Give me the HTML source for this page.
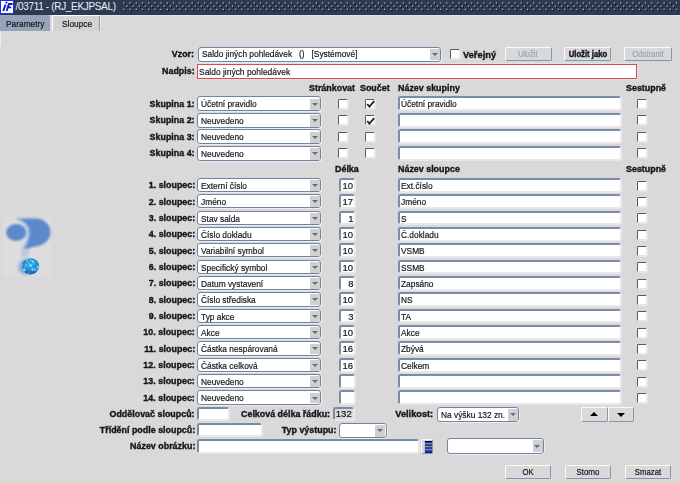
<!DOCTYPE html>
<html><head><meta charset="utf-8"><style>
html,body{margin:0;padding:0;}
body{width:680px;height:483px;overflow:hidden;position:relative;background:#d9d9d9;font-family:"Liberation Sans",sans-serif;font-size:10px;}
body>div,body>svg{position:absolute;}
.t{line-height:12px;white-space:pre;color:#14141c;-webkit-text-stroke-width:0.2px;}
.b{-webkit-text-stroke-width:0.4px;}
</style></head><body>
<div style="left:0px;top:0px;width:680px;height:14.5px;background:#2c3a52"></div>
<div style="left:0px;top:14.5px;width:680px;height:1.0px;background:#e2e4e8"></div>
<svg style="left:0;top:0" width="680" height="14"><rect x="124.20" y="3.30" width="1.3" height="1.3" fill="#080d18"/><rect x="123.20" y="2.30" width="1.3" height="1.3" fill="#b4bccb"/><rect x="127.30" y="6.50" width="1.3" height="1.3" fill="#080d18"/><rect x="126.30" y="5.50" width="1.3" height="1.3" fill="#b4bccb"/><rect x="124.20" y="9.70" width="1.3" height="1.3" fill="#080d18"/><rect x="123.20" y="8.70" width="1.3" height="1.3" fill="#b4bccb"/><rect x="130.41" y="3.30" width="1.3" height="1.3" fill="#080d18"/><rect x="129.41" y="2.30" width="1.3" height="1.3" fill="#b4bccb"/><rect x="133.51" y="6.50" width="1.3" height="1.3" fill="#080d18"/><rect x="132.51" y="5.50" width="1.3" height="1.3" fill="#b4bccb"/><rect x="130.41" y="9.70" width="1.3" height="1.3" fill="#080d18"/><rect x="129.41" y="8.70" width="1.3" height="1.3" fill="#b4bccb"/><rect x="136.62" y="3.30" width="1.3" height="1.3" fill="#080d18"/><rect x="135.62" y="2.30" width="1.3" height="1.3" fill="#b4bccb"/><rect x="139.72" y="6.50" width="1.3" height="1.3" fill="#080d18"/><rect x="138.72" y="5.50" width="1.3" height="1.3" fill="#b4bccb"/><rect x="136.62" y="9.70" width="1.3" height="1.3" fill="#080d18"/><rect x="135.62" y="8.70" width="1.3" height="1.3" fill="#b4bccb"/><rect x="142.83" y="3.30" width="1.3" height="1.3" fill="#080d18"/><rect x="141.83" y="2.30" width="1.3" height="1.3" fill="#b4bccb"/><rect x="145.93" y="6.50" width="1.3" height="1.3" fill="#080d18"/><rect x="144.93" y="5.50" width="1.3" height="1.3" fill="#b4bccb"/><rect x="142.83" y="9.70" width="1.3" height="1.3" fill="#080d18"/><rect x="141.83" y="8.70" width="1.3" height="1.3" fill="#b4bccb"/><rect x="149.04" y="3.30" width="1.3" height="1.3" fill="#080d18"/><rect x="148.04" y="2.30" width="1.3" height="1.3" fill="#b4bccb"/><rect x="152.14" y="6.50" width="1.3" height="1.3" fill="#080d18"/><rect x="151.14" y="5.50" width="1.3" height="1.3" fill="#b4bccb"/><rect x="149.04" y="9.70" width="1.3" height="1.3" fill="#080d18"/><rect x="148.04" y="8.70" width="1.3" height="1.3" fill="#b4bccb"/><rect x="155.25" y="3.30" width="1.3" height="1.3" fill="#080d18"/><rect x="154.25" y="2.30" width="1.3" height="1.3" fill="#b4bccb"/><rect x="158.35" y="6.50" width="1.3" height="1.3" fill="#080d18"/><rect x="157.35" y="5.50" width="1.3" height="1.3" fill="#b4bccb"/><rect x="155.25" y="9.70" width="1.3" height="1.3" fill="#080d18"/><rect x="154.25" y="8.70" width="1.3" height="1.3" fill="#b4bccb"/><rect x="161.46" y="3.30" width="1.3" height="1.3" fill="#080d18"/><rect x="160.46" y="2.30" width="1.3" height="1.3" fill="#b4bccb"/><rect x="164.56" y="6.50" width="1.3" height="1.3" fill="#080d18"/><rect x="163.56" y="5.50" width="1.3" height="1.3" fill="#b4bccb"/><rect x="161.46" y="9.70" width="1.3" height="1.3" fill="#080d18"/><rect x="160.46" y="8.70" width="1.3" height="1.3" fill="#b4bccb"/><rect x="167.67" y="3.30" width="1.3" height="1.3" fill="#080d18"/><rect x="166.67" y="2.30" width="1.3" height="1.3" fill="#b4bccb"/><rect x="170.77" y="6.50" width="1.3" height="1.3" fill="#080d18"/><rect x="169.77" y="5.50" width="1.3" height="1.3" fill="#b4bccb"/><rect x="167.67" y="9.70" width="1.3" height="1.3" fill="#080d18"/><rect x="166.67" y="8.70" width="1.3" height="1.3" fill="#b4bccb"/><rect x="173.88" y="3.30" width="1.3" height="1.3" fill="#080d18"/><rect x="172.88" y="2.30" width="1.3" height="1.3" fill="#b4bccb"/><rect x="176.98" y="6.50" width="1.3" height="1.3" fill="#080d18"/><rect x="175.98" y="5.50" width="1.3" height="1.3" fill="#b4bccb"/><rect x="173.88" y="9.70" width="1.3" height="1.3" fill="#080d18"/><rect x="172.88" y="8.70" width="1.3" height="1.3" fill="#b4bccb"/><rect x="180.09" y="3.30" width="1.3" height="1.3" fill="#080d18"/><rect x="179.09" y="2.30" width="1.3" height="1.3" fill="#b4bccb"/><rect x="183.19" y="6.50" width="1.3" height="1.3" fill="#080d18"/><rect x="182.19" y="5.50" width="1.3" height="1.3" fill="#b4bccb"/><rect x="180.09" y="9.70" width="1.3" height="1.3" fill="#080d18"/><rect x="179.09" y="8.70" width="1.3" height="1.3" fill="#b4bccb"/><rect x="186.30" y="3.30" width="1.3" height="1.3" fill="#080d18"/><rect x="185.30" y="2.30" width="1.3" height="1.3" fill="#b4bccb"/><rect x="189.40" y="6.50" width="1.3" height="1.3" fill="#080d18"/><rect x="188.40" y="5.50" width="1.3" height="1.3" fill="#b4bccb"/><rect x="186.30" y="9.70" width="1.3" height="1.3" fill="#080d18"/><rect x="185.30" y="8.70" width="1.3" height="1.3" fill="#b4bccb"/><rect x="192.51" y="3.30" width="1.3" height="1.3" fill="#080d18"/><rect x="191.51" y="2.30" width="1.3" height="1.3" fill="#b4bccb"/><rect x="195.61" y="6.50" width="1.3" height="1.3" fill="#080d18"/><rect x="194.61" y="5.50" width="1.3" height="1.3" fill="#b4bccb"/><rect x="192.51" y="9.70" width="1.3" height="1.3" fill="#080d18"/><rect x="191.51" y="8.70" width="1.3" height="1.3" fill="#b4bccb"/><rect x="198.72" y="3.30" width="1.3" height="1.3" fill="#080d18"/><rect x="197.72" y="2.30" width="1.3" height="1.3" fill="#b4bccb"/><rect x="201.82" y="6.50" width="1.3" height="1.3" fill="#080d18"/><rect x="200.82" y="5.50" width="1.3" height="1.3" fill="#b4bccb"/><rect x="198.72" y="9.70" width="1.3" height="1.3" fill="#080d18"/><rect x="197.72" y="8.70" width="1.3" height="1.3" fill="#b4bccb"/><rect x="204.93" y="3.30" width="1.3" height="1.3" fill="#080d18"/><rect x="203.93" y="2.30" width="1.3" height="1.3" fill="#b4bccb"/><rect x="208.03" y="6.50" width="1.3" height="1.3" fill="#080d18"/><rect x="207.03" y="5.50" width="1.3" height="1.3" fill="#b4bccb"/><rect x="204.93" y="9.70" width="1.3" height="1.3" fill="#080d18"/><rect x="203.93" y="8.70" width="1.3" height="1.3" fill="#b4bccb"/><rect x="211.14" y="3.30" width="1.3" height="1.3" fill="#080d18"/><rect x="210.14" y="2.30" width="1.3" height="1.3" fill="#b4bccb"/><rect x="214.24" y="6.50" width="1.3" height="1.3" fill="#080d18"/><rect x="213.24" y="5.50" width="1.3" height="1.3" fill="#b4bccb"/><rect x="211.14" y="9.70" width="1.3" height="1.3" fill="#080d18"/><rect x="210.14" y="8.70" width="1.3" height="1.3" fill="#b4bccb"/><rect x="217.35" y="3.30" width="1.3" height="1.3" fill="#080d18"/><rect x="216.35" y="2.30" width="1.3" height="1.3" fill="#b4bccb"/><rect x="220.45" y="6.50" width="1.3" height="1.3" fill="#080d18"/><rect x="219.45" y="5.50" width="1.3" height="1.3" fill="#b4bccb"/><rect x="217.35" y="9.70" width="1.3" height="1.3" fill="#080d18"/><rect x="216.35" y="8.70" width="1.3" height="1.3" fill="#b4bccb"/><rect x="223.56" y="3.30" width="1.3" height="1.3" fill="#080d18"/><rect x="222.56" y="2.30" width="1.3" height="1.3" fill="#b4bccb"/><rect x="226.66" y="6.50" width="1.3" height="1.3" fill="#080d18"/><rect x="225.66" y="5.50" width="1.3" height="1.3" fill="#b4bccb"/><rect x="223.56" y="9.70" width="1.3" height="1.3" fill="#080d18"/><rect x="222.56" y="8.70" width="1.3" height="1.3" fill="#b4bccb"/><rect x="229.77" y="3.30" width="1.3" height="1.3" fill="#080d18"/><rect x="228.77" y="2.30" width="1.3" height="1.3" fill="#b4bccb"/><rect x="232.87" y="6.50" width="1.3" height="1.3" fill="#080d18"/><rect x="231.87" y="5.50" width="1.3" height="1.3" fill="#b4bccb"/><rect x="229.77" y="9.70" width="1.3" height="1.3" fill="#080d18"/><rect x="228.77" y="8.70" width="1.3" height="1.3" fill="#b4bccb"/><rect x="235.98" y="3.30" width="1.3" height="1.3" fill="#080d18"/><rect x="234.98" y="2.30" width="1.3" height="1.3" fill="#b4bccb"/><rect x="239.08" y="6.50" width="1.3" height="1.3" fill="#080d18"/><rect x="238.08" y="5.50" width="1.3" height="1.3" fill="#b4bccb"/><rect x="235.98" y="9.70" width="1.3" height="1.3" fill="#080d18"/><rect x="234.98" y="8.70" width="1.3" height="1.3" fill="#b4bccb"/><rect x="242.19" y="3.30" width="1.3" height="1.3" fill="#080d18"/><rect x="241.19" y="2.30" width="1.3" height="1.3" fill="#b4bccb"/><rect x="245.29" y="6.50" width="1.3" height="1.3" fill="#080d18"/><rect x="244.29" y="5.50" width="1.3" height="1.3" fill="#b4bccb"/><rect x="242.19" y="9.70" width="1.3" height="1.3" fill="#080d18"/><rect x="241.19" y="8.70" width="1.3" height="1.3" fill="#b4bccb"/><rect x="248.40" y="3.30" width="1.3" height="1.3" fill="#080d18"/><rect x="247.40" y="2.30" width="1.3" height="1.3" fill="#b4bccb"/><rect x="251.50" y="6.50" width="1.3" height="1.3" fill="#080d18"/><rect x="250.50" y="5.50" width="1.3" height="1.3" fill="#b4bccb"/><rect x="248.40" y="9.70" width="1.3" height="1.3" fill="#080d18"/><rect x="247.40" y="8.70" width="1.3" height="1.3" fill="#b4bccb"/><rect x="254.61" y="3.30" width="1.3" height="1.3" fill="#080d18"/><rect x="253.61" y="2.30" width="1.3" height="1.3" fill="#b4bccb"/><rect x="257.71" y="6.50" width="1.3" height="1.3" fill="#080d18"/><rect x="256.71" y="5.50" width="1.3" height="1.3" fill="#b4bccb"/><rect x="254.61" y="9.70" width="1.3" height="1.3" fill="#080d18"/><rect x="253.61" y="8.70" width="1.3" height="1.3" fill="#b4bccb"/><rect x="260.82" y="3.30" width="1.3" height="1.3" fill="#080d18"/><rect x="259.82" y="2.30" width="1.3" height="1.3" fill="#b4bccb"/><rect x="263.92" y="6.50" width="1.3" height="1.3" fill="#080d18"/><rect x="262.92" y="5.50" width="1.3" height="1.3" fill="#b4bccb"/><rect x="260.82" y="9.70" width="1.3" height="1.3" fill="#080d18"/><rect x="259.82" y="8.70" width="1.3" height="1.3" fill="#b4bccb"/><rect x="267.03" y="3.30" width="1.3" height="1.3" fill="#080d18"/><rect x="266.03" y="2.30" width="1.3" height="1.3" fill="#b4bccb"/><rect x="270.13" y="6.50" width="1.3" height="1.3" fill="#080d18"/><rect x="269.13" y="5.50" width="1.3" height="1.3" fill="#b4bccb"/><rect x="267.03" y="9.70" width="1.3" height="1.3" fill="#080d18"/><rect x="266.03" y="8.70" width="1.3" height="1.3" fill="#b4bccb"/><rect x="273.24" y="3.30" width="1.3" height="1.3" fill="#080d18"/><rect x="272.24" y="2.30" width="1.3" height="1.3" fill="#b4bccb"/><rect x="276.34" y="6.50" width="1.3" height="1.3" fill="#080d18"/><rect x="275.34" y="5.50" width="1.3" height="1.3" fill="#b4bccb"/><rect x="273.24" y="9.70" width="1.3" height="1.3" fill="#080d18"/><rect x="272.24" y="8.70" width="1.3" height="1.3" fill="#b4bccb"/><rect x="279.45" y="3.30" width="1.3" height="1.3" fill="#080d18"/><rect x="278.45" y="2.30" width="1.3" height="1.3" fill="#b4bccb"/><rect x="282.55" y="6.50" width="1.3" height="1.3" fill="#080d18"/><rect x="281.55" y="5.50" width="1.3" height="1.3" fill="#b4bccb"/><rect x="279.45" y="9.70" width="1.3" height="1.3" fill="#080d18"/><rect x="278.45" y="8.70" width="1.3" height="1.3" fill="#b4bccb"/><rect x="285.66" y="3.30" width="1.3" height="1.3" fill="#080d18"/><rect x="284.66" y="2.30" width="1.3" height="1.3" fill="#b4bccb"/><rect x="288.76" y="6.50" width="1.3" height="1.3" fill="#080d18"/><rect x="287.76" y="5.50" width="1.3" height="1.3" fill="#b4bccb"/><rect x="285.66" y="9.70" width="1.3" height="1.3" fill="#080d18"/><rect x="284.66" y="8.70" width="1.3" height="1.3" fill="#b4bccb"/><rect x="291.87" y="3.30" width="1.3" height="1.3" fill="#080d18"/><rect x="290.87" y="2.30" width="1.3" height="1.3" fill="#b4bccb"/><rect x="294.97" y="6.50" width="1.3" height="1.3" fill="#080d18"/><rect x="293.97" y="5.50" width="1.3" height="1.3" fill="#b4bccb"/><rect x="291.87" y="9.70" width="1.3" height="1.3" fill="#080d18"/><rect x="290.87" y="8.70" width="1.3" height="1.3" fill="#b4bccb"/><rect x="298.08" y="3.30" width="1.3" height="1.3" fill="#080d18"/><rect x="297.08" y="2.30" width="1.3" height="1.3" fill="#b4bccb"/><rect x="301.18" y="6.50" width="1.3" height="1.3" fill="#080d18"/><rect x="300.18" y="5.50" width="1.3" height="1.3" fill="#b4bccb"/><rect x="298.08" y="9.70" width="1.3" height="1.3" fill="#080d18"/><rect x="297.08" y="8.70" width="1.3" height="1.3" fill="#b4bccb"/><rect x="304.29" y="3.30" width="1.3" height="1.3" fill="#080d18"/><rect x="303.29" y="2.30" width="1.3" height="1.3" fill="#b4bccb"/><rect x="307.39" y="6.50" width="1.3" height="1.3" fill="#080d18"/><rect x="306.39" y="5.50" width="1.3" height="1.3" fill="#b4bccb"/><rect x="304.29" y="9.70" width="1.3" height="1.3" fill="#080d18"/><rect x="303.29" y="8.70" width="1.3" height="1.3" fill="#b4bccb"/><rect x="310.50" y="3.30" width="1.3" height="1.3" fill="#080d18"/><rect x="309.50" y="2.30" width="1.3" height="1.3" fill="#b4bccb"/><rect x="313.60" y="6.50" width="1.3" height="1.3" fill="#080d18"/><rect x="312.60" y="5.50" width="1.3" height="1.3" fill="#b4bccb"/><rect x="310.50" y="9.70" width="1.3" height="1.3" fill="#080d18"/><rect x="309.50" y="8.70" width="1.3" height="1.3" fill="#b4bccb"/><rect x="316.71" y="3.30" width="1.3" height="1.3" fill="#080d18"/><rect x="315.71" y="2.30" width="1.3" height="1.3" fill="#b4bccb"/><rect x="319.81" y="6.50" width="1.3" height="1.3" fill="#080d18"/><rect x="318.81" y="5.50" width="1.3" height="1.3" fill="#b4bccb"/><rect x="316.71" y="9.70" width="1.3" height="1.3" fill="#080d18"/><rect x="315.71" y="8.70" width="1.3" height="1.3" fill="#b4bccb"/><rect x="322.92" y="3.30" width="1.3" height="1.3" fill="#080d18"/><rect x="321.92" y="2.30" width="1.3" height="1.3" fill="#b4bccb"/><rect x="326.02" y="6.50" width="1.3" height="1.3" fill="#080d18"/><rect x="325.02" y="5.50" width="1.3" height="1.3" fill="#b4bccb"/><rect x="322.92" y="9.70" width="1.3" height="1.3" fill="#080d18"/><rect x="321.92" y="8.70" width="1.3" height="1.3" fill="#b4bccb"/><rect x="329.13" y="3.30" width="1.3" height="1.3" fill="#080d18"/><rect x="328.13" y="2.30" width="1.3" height="1.3" fill="#b4bccb"/><rect x="332.23" y="6.50" width="1.3" height="1.3" fill="#080d18"/><rect x="331.23" y="5.50" width="1.3" height="1.3" fill="#b4bccb"/><rect x="329.13" y="9.70" width="1.3" height="1.3" fill="#080d18"/><rect x="328.13" y="8.70" width="1.3" height="1.3" fill="#b4bccb"/><rect x="335.34" y="3.30" width="1.3" height="1.3" fill="#080d18"/><rect x="334.34" y="2.30" width="1.3" height="1.3" fill="#b4bccb"/><rect x="338.44" y="6.50" width="1.3" height="1.3" fill="#080d18"/><rect x="337.44" y="5.50" width="1.3" height="1.3" fill="#b4bccb"/><rect x="335.34" y="9.70" width="1.3" height="1.3" fill="#080d18"/><rect x="334.34" y="8.70" width="1.3" height="1.3" fill="#b4bccb"/><rect x="341.55" y="3.30" width="1.3" height="1.3" fill="#080d18"/><rect x="340.55" y="2.30" width="1.3" height="1.3" fill="#b4bccb"/><rect x="344.65" y="6.50" width="1.3" height="1.3" fill="#080d18"/><rect x="343.65" y="5.50" width="1.3" height="1.3" fill="#b4bccb"/><rect x="341.55" y="9.70" width="1.3" height="1.3" fill="#080d18"/><rect x="340.55" y="8.70" width="1.3" height="1.3" fill="#b4bccb"/><rect x="347.76" y="3.30" width="1.3" height="1.3" fill="#080d18"/><rect x="346.76" y="2.30" width="1.3" height="1.3" fill="#b4bccb"/><rect x="350.86" y="6.50" width="1.3" height="1.3" fill="#080d18"/><rect x="349.86" y="5.50" width="1.3" height="1.3" fill="#b4bccb"/><rect x="347.76" y="9.70" width="1.3" height="1.3" fill="#080d18"/><rect x="346.76" y="8.70" width="1.3" height="1.3" fill="#b4bccb"/><rect x="353.97" y="3.30" width="1.3" height="1.3" fill="#080d18"/><rect x="352.97" y="2.30" width="1.3" height="1.3" fill="#b4bccb"/><rect x="357.07" y="6.50" width="1.3" height="1.3" fill="#080d18"/><rect x="356.07" y="5.50" width="1.3" height="1.3" fill="#b4bccb"/><rect x="353.97" y="9.70" width="1.3" height="1.3" fill="#080d18"/><rect x="352.97" y="8.70" width="1.3" height="1.3" fill="#b4bccb"/><rect x="360.18" y="3.30" width="1.3" height="1.3" fill="#080d18"/><rect x="359.18" y="2.30" width="1.3" height="1.3" fill="#b4bccb"/><rect x="363.28" y="6.50" width="1.3" height="1.3" fill="#080d18"/><rect x="362.28" y="5.50" width="1.3" height="1.3" fill="#b4bccb"/><rect x="360.18" y="9.70" width="1.3" height="1.3" fill="#080d18"/><rect x="359.18" y="8.70" width="1.3" height="1.3" fill="#b4bccb"/><rect x="366.39" y="3.30" width="1.3" height="1.3" fill="#080d18"/><rect x="365.39" y="2.30" width="1.3" height="1.3" fill="#b4bccb"/><rect x="369.49" y="6.50" width="1.3" height="1.3" fill="#080d18"/><rect x="368.49" y="5.50" width="1.3" height="1.3" fill="#b4bccb"/><rect x="366.39" y="9.70" width="1.3" height="1.3" fill="#080d18"/><rect x="365.39" y="8.70" width="1.3" height="1.3" fill="#b4bccb"/><rect x="372.60" y="3.30" width="1.3" height="1.3" fill="#080d18"/><rect x="371.60" y="2.30" width="1.3" height="1.3" fill="#b4bccb"/><rect x="375.70" y="6.50" width="1.3" height="1.3" fill="#080d18"/><rect x="374.70" y="5.50" width="1.3" height="1.3" fill="#b4bccb"/><rect x="372.60" y="9.70" width="1.3" height="1.3" fill="#080d18"/><rect x="371.60" y="8.70" width="1.3" height="1.3" fill="#b4bccb"/><rect x="378.81" y="3.30" width="1.3" height="1.3" fill="#080d18"/><rect x="377.81" y="2.30" width="1.3" height="1.3" fill="#b4bccb"/><rect x="381.91" y="6.50" width="1.3" height="1.3" fill="#080d18"/><rect x="380.91" y="5.50" width="1.3" height="1.3" fill="#b4bccb"/><rect x="378.81" y="9.70" width="1.3" height="1.3" fill="#080d18"/><rect x="377.81" y="8.70" width="1.3" height="1.3" fill="#b4bccb"/><rect x="385.02" y="3.30" width="1.3" height="1.3" fill="#080d18"/><rect x="384.02" y="2.30" width="1.3" height="1.3" fill="#b4bccb"/><rect x="388.12" y="6.50" width="1.3" height="1.3" fill="#080d18"/><rect x="387.12" y="5.50" width="1.3" height="1.3" fill="#b4bccb"/><rect x="385.02" y="9.70" width="1.3" height="1.3" fill="#080d18"/><rect x="384.02" y="8.70" width="1.3" height="1.3" fill="#b4bccb"/><rect x="391.23" y="3.30" width="1.3" height="1.3" fill="#080d18"/><rect x="390.23" y="2.30" width="1.3" height="1.3" fill="#b4bccb"/><rect x="394.33" y="6.50" width="1.3" height="1.3" fill="#080d18"/><rect x="393.33" y="5.50" width="1.3" height="1.3" fill="#b4bccb"/><rect x="391.23" y="9.70" width="1.3" height="1.3" fill="#080d18"/><rect x="390.23" y="8.70" width="1.3" height="1.3" fill="#b4bccb"/><rect x="397.44" y="3.30" width="1.3" height="1.3" fill="#080d18"/><rect x="396.44" y="2.30" width="1.3" height="1.3" fill="#b4bccb"/><rect x="400.54" y="6.50" width="1.3" height="1.3" fill="#080d18"/><rect x="399.54" y="5.50" width="1.3" height="1.3" fill="#b4bccb"/><rect x="397.44" y="9.70" width="1.3" height="1.3" fill="#080d18"/><rect x="396.44" y="8.70" width="1.3" height="1.3" fill="#b4bccb"/><rect x="403.65" y="3.30" width="1.3" height="1.3" fill="#080d18"/><rect x="402.65" y="2.30" width="1.3" height="1.3" fill="#b4bccb"/><rect x="406.75" y="6.50" width="1.3" height="1.3" fill="#080d18"/><rect x="405.75" y="5.50" width="1.3" height="1.3" fill="#b4bccb"/><rect x="403.65" y="9.70" width="1.3" height="1.3" fill="#080d18"/><rect x="402.65" y="8.70" width="1.3" height="1.3" fill="#b4bccb"/><rect x="409.86" y="3.30" width="1.3" height="1.3" fill="#080d18"/><rect x="408.86" y="2.30" width="1.3" height="1.3" fill="#b4bccb"/><rect x="412.96" y="6.50" width="1.3" height="1.3" fill="#080d18"/><rect x="411.96" y="5.50" width="1.3" height="1.3" fill="#b4bccb"/><rect x="409.86" y="9.70" width="1.3" height="1.3" fill="#080d18"/><rect x="408.86" y="8.70" width="1.3" height="1.3" fill="#b4bccb"/><rect x="416.07" y="3.30" width="1.3" height="1.3" fill="#080d18"/><rect x="415.07" y="2.30" width="1.3" height="1.3" fill="#b4bccb"/><rect x="419.17" y="6.50" width="1.3" height="1.3" fill="#080d18"/><rect x="418.17" y="5.50" width="1.3" height="1.3" fill="#b4bccb"/><rect x="416.07" y="9.70" width="1.3" height="1.3" fill="#080d18"/><rect x="415.07" y="8.70" width="1.3" height="1.3" fill="#b4bccb"/><rect x="422.28" y="3.30" width="1.3" height="1.3" fill="#080d18"/><rect x="421.28" y="2.30" width="1.3" height="1.3" fill="#b4bccb"/><rect x="425.38" y="6.50" width="1.3" height="1.3" fill="#080d18"/><rect x="424.38" y="5.50" width="1.3" height="1.3" fill="#b4bccb"/><rect x="422.28" y="9.70" width="1.3" height="1.3" fill="#080d18"/><rect x="421.28" y="8.70" width="1.3" height="1.3" fill="#b4bccb"/><rect x="428.49" y="3.30" width="1.3" height="1.3" fill="#080d18"/><rect x="427.49" y="2.30" width="1.3" height="1.3" fill="#b4bccb"/><rect x="431.59" y="6.50" width="1.3" height="1.3" fill="#080d18"/><rect x="430.59" y="5.50" width="1.3" height="1.3" fill="#b4bccb"/><rect x="428.49" y="9.70" width="1.3" height="1.3" fill="#080d18"/><rect x="427.49" y="8.70" width="1.3" height="1.3" fill="#b4bccb"/><rect x="434.70" y="3.30" width="1.3" height="1.3" fill="#080d18"/><rect x="433.70" y="2.30" width="1.3" height="1.3" fill="#b4bccb"/><rect x="437.80" y="6.50" width="1.3" height="1.3" fill="#080d18"/><rect x="436.80" y="5.50" width="1.3" height="1.3" fill="#b4bccb"/><rect x="434.70" y="9.70" width="1.3" height="1.3" fill="#080d18"/><rect x="433.70" y="8.70" width="1.3" height="1.3" fill="#b4bccb"/><rect x="440.91" y="3.30" width="1.3" height="1.3" fill="#080d18"/><rect x="439.91" y="2.30" width="1.3" height="1.3" fill="#b4bccb"/><rect x="444.01" y="6.50" width="1.3" height="1.3" fill="#080d18"/><rect x="443.01" y="5.50" width="1.3" height="1.3" fill="#b4bccb"/><rect x="440.91" y="9.70" width="1.3" height="1.3" fill="#080d18"/><rect x="439.91" y="8.70" width="1.3" height="1.3" fill="#b4bccb"/><rect x="447.12" y="3.30" width="1.3" height="1.3" fill="#080d18"/><rect x="446.12" y="2.30" width="1.3" height="1.3" fill="#b4bccb"/><rect x="450.22" y="6.50" width="1.3" height="1.3" fill="#080d18"/><rect x="449.22" y="5.50" width="1.3" height="1.3" fill="#b4bccb"/><rect x="447.12" y="9.70" width="1.3" height="1.3" fill="#080d18"/><rect x="446.12" y="8.70" width="1.3" height="1.3" fill="#b4bccb"/><rect x="453.33" y="3.30" width="1.3" height="1.3" fill="#080d18"/><rect x="452.33" y="2.30" width="1.3" height="1.3" fill="#b4bccb"/><rect x="456.43" y="6.50" width="1.3" height="1.3" fill="#080d18"/><rect x="455.43" y="5.50" width="1.3" height="1.3" fill="#b4bccb"/><rect x="453.33" y="9.70" width="1.3" height="1.3" fill="#080d18"/><rect x="452.33" y="8.70" width="1.3" height="1.3" fill="#b4bccb"/><rect x="459.54" y="3.30" width="1.3" height="1.3" fill="#080d18"/><rect x="458.54" y="2.30" width="1.3" height="1.3" fill="#b4bccb"/><rect x="462.64" y="6.50" width="1.3" height="1.3" fill="#080d18"/><rect x="461.64" y="5.50" width="1.3" height="1.3" fill="#b4bccb"/><rect x="459.54" y="9.70" width="1.3" height="1.3" fill="#080d18"/><rect x="458.54" y="8.70" width="1.3" height="1.3" fill="#b4bccb"/><rect x="465.75" y="3.30" width="1.3" height="1.3" fill="#080d18"/><rect x="464.75" y="2.30" width="1.3" height="1.3" fill="#b4bccb"/><rect x="468.85" y="6.50" width="1.3" height="1.3" fill="#080d18"/><rect x="467.85" y="5.50" width="1.3" height="1.3" fill="#b4bccb"/><rect x="465.75" y="9.70" width="1.3" height="1.3" fill="#080d18"/><rect x="464.75" y="8.70" width="1.3" height="1.3" fill="#b4bccb"/><rect x="471.96" y="3.30" width="1.3" height="1.3" fill="#080d18"/><rect x="470.96" y="2.30" width="1.3" height="1.3" fill="#b4bccb"/><rect x="475.06" y="6.50" width="1.3" height="1.3" fill="#080d18"/><rect x="474.06" y="5.50" width="1.3" height="1.3" fill="#b4bccb"/><rect x="471.96" y="9.70" width="1.3" height="1.3" fill="#080d18"/><rect x="470.96" y="8.70" width="1.3" height="1.3" fill="#b4bccb"/><rect x="478.17" y="3.30" width="1.3" height="1.3" fill="#080d18"/><rect x="477.17" y="2.30" width="1.3" height="1.3" fill="#b4bccb"/><rect x="481.27" y="6.50" width="1.3" height="1.3" fill="#080d18"/><rect x="480.27" y="5.50" width="1.3" height="1.3" fill="#b4bccb"/><rect x="478.17" y="9.70" width="1.3" height="1.3" fill="#080d18"/><rect x="477.17" y="8.70" width="1.3" height="1.3" fill="#b4bccb"/><rect x="484.38" y="3.30" width="1.3" height="1.3" fill="#080d18"/><rect x="483.38" y="2.30" width="1.3" height="1.3" fill="#b4bccb"/><rect x="487.48" y="6.50" width="1.3" height="1.3" fill="#080d18"/><rect x="486.48" y="5.50" width="1.3" height="1.3" fill="#b4bccb"/><rect x="484.38" y="9.70" width="1.3" height="1.3" fill="#080d18"/><rect x="483.38" y="8.70" width="1.3" height="1.3" fill="#b4bccb"/><rect x="490.59" y="3.30" width="1.3" height="1.3" fill="#080d18"/><rect x="489.59" y="2.30" width="1.3" height="1.3" fill="#b4bccb"/><rect x="493.69" y="6.50" width="1.3" height="1.3" fill="#080d18"/><rect x="492.69" y="5.50" width="1.3" height="1.3" fill="#b4bccb"/><rect x="490.59" y="9.70" width="1.3" height="1.3" fill="#080d18"/><rect x="489.59" y="8.70" width="1.3" height="1.3" fill="#b4bccb"/><rect x="496.80" y="3.30" width="1.3" height="1.3" fill="#080d18"/><rect x="495.80" y="2.30" width="1.3" height="1.3" fill="#b4bccb"/><rect x="499.90" y="6.50" width="1.3" height="1.3" fill="#080d18"/><rect x="498.90" y="5.50" width="1.3" height="1.3" fill="#b4bccb"/><rect x="496.80" y="9.70" width="1.3" height="1.3" fill="#080d18"/><rect x="495.80" y="8.70" width="1.3" height="1.3" fill="#b4bccb"/><rect x="503.01" y="3.30" width="1.3" height="1.3" fill="#080d18"/><rect x="502.01" y="2.30" width="1.3" height="1.3" fill="#b4bccb"/><rect x="506.11" y="6.50" width="1.3" height="1.3" fill="#080d18"/><rect x="505.11" y="5.50" width="1.3" height="1.3" fill="#b4bccb"/><rect x="503.01" y="9.70" width="1.3" height="1.3" fill="#080d18"/><rect x="502.01" y="8.70" width="1.3" height="1.3" fill="#b4bccb"/><rect x="509.22" y="3.30" width="1.3" height="1.3" fill="#080d18"/><rect x="508.22" y="2.30" width="1.3" height="1.3" fill="#b4bccb"/><rect x="512.32" y="6.50" width="1.3" height="1.3" fill="#080d18"/><rect x="511.32" y="5.50" width="1.3" height="1.3" fill="#b4bccb"/><rect x="509.22" y="9.70" width="1.3" height="1.3" fill="#080d18"/><rect x="508.22" y="8.70" width="1.3" height="1.3" fill="#b4bccb"/><rect x="515.43" y="3.30" width="1.3" height="1.3" fill="#080d18"/><rect x="514.43" y="2.30" width="1.3" height="1.3" fill="#b4bccb"/><rect x="518.53" y="6.50" width="1.3" height="1.3" fill="#080d18"/><rect x="517.53" y="5.50" width="1.3" height="1.3" fill="#b4bccb"/><rect x="515.43" y="9.70" width="1.3" height="1.3" fill="#080d18"/><rect x="514.43" y="8.70" width="1.3" height="1.3" fill="#b4bccb"/><rect x="521.64" y="3.30" width="1.3" height="1.3" fill="#080d18"/><rect x="520.64" y="2.30" width="1.3" height="1.3" fill="#b4bccb"/><rect x="524.74" y="6.50" width="1.3" height="1.3" fill="#080d18"/><rect x="523.74" y="5.50" width="1.3" height="1.3" fill="#b4bccb"/><rect x="521.64" y="9.70" width="1.3" height="1.3" fill="#080d18"/><rect x="520.64" y="8.70" width="1.3" height="1.3" fill="#b4bccb"/><rect x="527.85" y="3.30" width="1.3" height="1.3" fill="#080d18"/><rect x="526.85" y="2.30" width="1.3" height="1.3" fill="#b4bccb"/><rect x="530.95" y="6.50" width="1.3" height="1.3" fill="#080d18"/><rect x="529.95" y="5.50" width="1.3" height="1.3" fill="#b4bccb"/><rect x="527.85" y="9.70" width="1.3" height="1.3" fill="#080d18"/><rect x="526.85" y="8.70" width="1.3" height="1.3" fill="#b4bccb"/><rect x="534.06" y="3.30" width="1.3" height="1.3" fill="#080d18"/><rect x="533.06" y="2.30" width="1.3" height="1.3" fill="#b4bccb"/><rect x="537.16" y="6.50" width="1.3" height="1.3" fill="#080d18"/><rect x="536.16" y="5.50" width="1.3" height="1.3" fill="#b4bccb"/><rect x="534.06" y="9.70" width="1.3" height="1.3" fill="#080d18"/><rect x="533.06" y="8.70" width="1.3" height="1.3" fill="#b4bccb"/><rect x="540.27" y="3.30" width="1.3" height="1.3" fill="#080d18"/><rect x="539.27" y="2.30" width="1.3" height="1.3" fill="#b4bccb"/><rect x="543.37" y="6.50" width="1.3" height="1.3" fill="#080d18"/><rect x="542.37" y="5.50" width="1.3" height="1.3" fill="#b4bccb"/><rect x="540.27" y="9.70" width="1.3" height="1.3" fill="#080d18"/><rect x="539.27" y="8.70" width="1.3" height="1.3" fill="#b4bccb"/><rect x="546.48" y="3.30" width="1.3" height="1.3" fill="#080d18"/><rect x="545.48" y="2.30" width="1.3" height="1.3" fill="#b4bccb"/><rect x="549.58" y="6.50" width="1.3" height="1.3" fill="#080d18"/><rect x="548.58" y="5.50" width="1.3" height="1.3" fill="#b4bccb"/><rect x="546.48" y="9.70" width="1.3" height="1.3" fill="#080d18"/><rect x="545.48" y="8.70" width="1.3" height="1.3" fill="#b4bccb"/><rect x="552.69" y="3.30" width="1.3" height="1.3" fill="#080d18"/><rect x="551.69" y="2.30" width="1.3" height="1.3" fill="#b4bccb"/><rect x="555.79" y="6.50" width="1.3" height="1.3" fill="#080d18"/><rect x="554.79" y="5.50" width="1.3" height="1.3" fill="#b4bccb"/><rect x="552.69" y="9.70" width="1.3" height="1.3" fill="#080d18"/><rect x="551.69" y="8.70" width="1.3" height="1.3" fill="#b4bccb"/><rect x="558.90" y="3.30" width="1.3" height="1.3" fill="#080d18"/><rect x="557.90" y="2.30" width="1.3" height="1.3" fill="#b4bccb"/><rect x="562.00" y="6.50" width="1.3" height="1.3" fill="#080d18"/><rect x="561.00" y="5.50" width="1.3" height="1.3" fill="#b4bccb"/><rect x="558.90" y="9.70" width="1.3" height="1.3" fill="#080d18"/><rect x="557.90" y="8.70" width="1.3" height="1.3" fill="#b4bccb"/><rect x="565.11" y="3.30" width="1.3" height="1.3" fill="#080d18"/><rect x="564.11" y="2.30" width="1.3" height="1.3" fill="#b4bccb"/><rect x="568.21" y="6.50" width="1.3" height="1.3" fill="#080d18"/><rect x="567.21" y="5.50" width="1.3" height="1.3" fill="#b4bccb"/><rect x="565.11" y="9.70" width="1.3" height="1.3" fill="#080d18"/><rect x="564.11" y="8.70" width="1.3" height="1.3" fill="#b4bccb"/><rect x="571.32" y="3.30" width="1.3" height="1.3" fill="#080d18"/><rect x="570.32" y="2.30" width="1.3" height="1.3" fill="#b4bccb"/><rect x="574.42" y="6.50" width="1.3" height="1.3" fill="#080d18"/><rect x="573.42" y="5.50" width="1.3" height="1.3" fill="#b4bccb"/><rect x="571.32" y="9.70" width="1.3" height="1.3" fill="#080d18"/><rect x="570.32" y="8.70" width="1.3" height="1.3" fill="#b4bccb"/><rect x="577.53" y="3.30" width="1.3" height="1.3" fill="#080d18"/><rect x="576.53" y="2.30" width="1.3" height="1.3" fill="#b4bccb"/><rect x="580.63" y="6.50" width="1.3" height="1.3" fill="#080d18"/><rect x="579.63" y="5.50" width="1.3" height="1.3" fill="#b4bccb"/><rect x="577.53" y="9.70" width="1.3" height="1.3" fill="#080d18"/><rect x="576.53" y="8.70" width="1.3" height="1.3" fill="#b4bccb"/><rect x="583.74" y="3.30" width="1.3" height="1.3" fill="#080d18"/><rect x="582.74" y="2.30" width="1.3" height="1.3" fill="#b4bccb"/><rect x="586.84" y="6.50" width="1.3" height="1.3" fill="#080d18"/><rect x="585.84" y="5.50" width="1.3" height="1.3" fill="#b4bccb"/><rect x="583.74" y="9.70" width="1.3" height="1.3" fill="#080d18"/><rect x="582.74" y="8.70" width="1.3" height="1.3" fill="#b4bccb"/><rect x="589.95" y="3.30" width="1.3" height="1.3" fill="#080d18"/><rect x="588.95" y="2.30" width="1.3" height="1.3" fill="#b4bccb"/><rect x="593.05" y="6.50" width="1.3" height="1.3" fill="#080d18"/><rect x="592.05" y="5.50" width="1.3" height="1.3" fill="#b4bccb"/><rect x="589.95" y="9.70" width="1.3" height="1.3" fill="#080d18"/><rect x="588.95" y="8.70" width="1.3" height="1.3" fill="#b4bccb"/><rect x="596.16" y="3.30" width="1.3" height="1.3" fill="#080d18"/><rect x="595.16" y="2.30" width="1.3" height="1.3" fill="#b4bccb"/><rect x="599.26" y="6.50" width="1.3" height="1.3" fill="#080d18"/><rect x="598.26" y="5.50" width="1.3" height="1.3" fill="#b4bccb"/><rect x="596.16" y="9.70" width="1.3" height="1.3" fill="#080d18"/><rect x="595.16" y="8.70" width="1.3" height="1.3" fill="#b4bccb"/><rect x="602.37" y="3.30" width="1.3" height="1.3" fill="#080d18"/><rect x="601.37" y="2.30" width="1.3" height="1.3" fill="#b4bccb"/><rect x="605.47" y="6.50" width="1.3" height="1.3" fill="#080d18"/><rect x="604.47" y="5.50" width="1.3" height="1.3" fill="#b4bccb"/><rect x="602.37" y="9.70" width="1.3" height="1.3" fill="#080d18"/><rect x="601.37" y="8.70" width="1.3" height="1.3" fill="#b4bccb"/><rect x="608.58" y="3.30" width="1.3" height="1.3" fill="#080d18"/><rect x="607.58" y="2.30" width="1.3" height="1.3" fill="#b4bccb"/><rect x="611.68" y="6.50" width="1.3" height="1.3" fill="#080d18"/><rect x="610.68" y="5.50" width="1.3" height="1.3" fill="#b4bccb"/><rect x="608.58" y="9.70" width="1.3" height="1.3" fill="#080d18"/><rect x="607.58" y="8.70" width="1.3" height="1.3" fill="#b4bccb"/><rect x="614.79" y="3.30" width="1.3" height="1.3" fill="#080d18"/><rect x="613.79" y="2.30" width="1.3" height="1.3" fill="#b4bccb"/><rect x="617.89" y="6.50" width="1.3" height="1.3" fill="#080d18"/><rect x="616.89" y="5.50" width="1.3" height="1.3" fill="#b4bccb"/><rect x="614.79" y="9.70" width="1.3" height="1.3" fill="#080d18"/><rect x="613.79" y="8.70" width="1.3" height="1.3" fill="#b4bccb"/><rect x="621.00" y="3.30" width="1.3" height="1.3" fill="#080d18"/><rect x="620.00" y="2.30" width="1.3" height="1.3" fill="#b4bccb"/><rect x="624.10" y="6.50" width="1.3" height="1.3" fill="#080d18"/><rect x="623.10" y="5.50" width="1.3" height="1.3" fill="#b4bccb"/><rect x="621.00" y="9.70" width="1.3" height="1.3" fill="#080d18"/><rect x="620.00" y="8.70" width="1.3" height="1.3" fill="#b4bccb"/><rect x="627.21" y="3.30" width="1.3" height="1.3" fill="#080d18"/><rect x="626.21" y="2.30" width="1.3" height="1.3" fill="#b4bccb"/><rect x="630.31" y="6.50" width="1.3" height="1.3" fill="#080d18"/><rect x="629.31" y="5.50" width="1.3" height="1.3" fill="#b4bccb"/><rect x="627.21" y="9.70" width="1.3" height="1.3" fill="#080d18"/><rect x="626.21" y="8.70" width="1.3" height="1.3" fill="#b4bccb"/><rect x="633.42" y="3.30" width="1.3" height="1.3" fill="#080d18"/><rect x="632.42" y="2.30" width="1.3" height="1.3" fill="#b4bccb"/><rect x="636.52" y="6.50" width="1.3" height="1.3" fill="#080d18"/><rect x="635.52" y="5.50" width="1.3" height="1.3" fill="#b4bccb"/><rect x="633.42" y="9.70" width="1.3" height="1.3" fill="#080d18"/><rect x="632.42" y="8.70" width="1.3" height="1.3" fill="#b4bccb"/><rect x="639.63" y="3.30" width="1.3" height="1.3" fill="#080d18"/><rect x="638.63" y="2.30" width="1.3" height="1.3" fill="#b4bccb"/><rect x="642.73" y="6.50" width="1.3" height="1.3" fill="#080d18"/><rect x="641.73" y="5.50" width="1.3" height="1.3" fill="#b4bccb"/><rect x="639.63" y="9.70" width="1.3" height="1.3" fill="#080d18"/><rect x="638.63" y="8.70" width="1.3" height="1.3" fill="#b4bccb"/><rect x="645.84" y="3.30" width="1.3" height="1.3" fill="#080d18"/><rect x="644.84" y="2.30" width="1.3" height="1.3" fill="#b4bccb"/><rect x="648.94" y="6.50" width="1.3" height="1.3" fill="#080d18"/><rect x="647.94" y="5.50" width="1.3" height="1.3" fill="#b4bccb"/><rect x="645.84" y="9.70" width="1.3" height="1.3" fill="#080d18"/><rect x="644.84" y="8.70" width="1.3" height="1.3" fill="#b4bccb"/><rect x="652.05" y="3.30" width="1.3" height="1.3" fill="#080d18"/><rect x="651.05" y="2.30" width="1.3" height="1.3" fill="#b4bccb"/><rect x="655.15" y="6.50" width="1.3" height="1.3" fill="#080d18"/><rect x="654.15" y="5.50" width="1.3" height="1.3" fill="#b4bccb"/><rect x="652.05" y="9.70" width="1.3" height="1.3" fill="#080d18"/><rect x="651.05" y="8.70" width="1.3" height="1.3" fill="#b4bccb"/><rect x="658.26" y="3.30" width="1.3" height="1.3" fill="#080d18"/><rect x="657.26" y="2.30" width="1.3" height="1.3" fill="#b4bccb"/><rect x="661.36" y="6.50" width="1.3" height="1.3" fill="#080d18"/><rect x="660.36" y="5.50" width="1.3" height="1.3" fill="#b4bccb"/><rect x="658.26" y="9.70" width="1.3" height="1.3" fill="#080d18"/><rect x="657.26" y="8.70" width="1.3" height="1.3" fill="#b4bccb"/><rect x="664.47" y="3.30" width="1.3" height="1.3" fill="#080d18"/><rect x="663.47" y="2.30" width="1.3" height="1.3" fill="#b4bccb"/><rect x="667.57" y="6.50" width="1.3" height="1.3" fill="#080d18"/><rect x="666.57" y="5.50" width="1.3" height="1.3" fill="#b4bccb"/><rect x="664.47" y="9.70" width="1.3" height="1.3" fill="#080d18"/><rect x="663.47" y="8.70" width="1.3" height="1.3" fill="#b4bccb"/><rect x="670.68" y="3.30" width="1.3" height="1.3" fill="#080d18"/><rect x="669.68" y="2.30" width="1.3" height="1.3" fill="#b4bccb"/><rect x="673.78" y="6.50" width="1.3" height="1.3" fill="#080d18"/><rect x="672.78" y="5.50" width="1.3" height="1.3" fill="#b4bccb"/><rect x="670.68" y="9.70" width="1.3" height="1.3" fill="#080d18"/><rect x="669.68" y="8.70" width="1.3" height="1.3" fill="#b4bccb"/><rect x="676.89" y="3.30" width="1.3" height="1.3" fill="#080d18"/><rect x="675.89" y="2.30" width="1.3" height="1.3" fill="#b4bccb"/><rect x="676.89" y="9.70" width="1.3" height="1.3" fill="#080d18"/><rect x="675.89" y="8.70" width="1.3" height="1.3" fill="#b4bccb"/></svg>
<div style="left:0px;top:0px;width:13.5px;height:13.5px;background:#fff;border:1.3px solid #1f2fe0;box-sizing:border-box"></div>
<svg style="left:0;top:0" width="14" height="14" viewBox="0 0 14 14"><path d="M3.2 11 L5.6 4.6" stroke="#0c18d8" stroke-width="1.9"/><circle cx="6.4" cy="2.6" r="1.1" fill="#0c18d8"/><path d="M6.6 11 L9 4 L12.6 4 M7.9 7.4 L11.2 7.4" stroke="#0c18d8" stroke-width="1.9" fill="none"/></svg>
<div class="t" style="left:15.5px;top:1.2px;font-size:10px;line-height:11px;color:#eef2f8;letter-spacing:-0.33px;-webkit-text-stroke-width:0">/03711 - (RJ_EKJPSAL)</div>
<div style="left:0px;top:15px;width:49.5px;height:16px;background:#96a3b8;border-top-right-radius:2px"></div>
<div class="t" style="left:6.2px;top:17.54px;color:#14141c;transform:scale(0.835,0.97);transform-origin:0 9.46px">Parametry</div>
<div style="left:52px;top:15px;width:48px;height:15.600000000000001px;box-sizing:border-box;background:#d3d3d3;border-top:1px solid #fff;border-left:1px solid #fff;border-right:1.2px solid #8a96ad;box-shadow:1px 0 0 #ececec;border-top-left-radius:2px;border-top-right-radius:2px"></div>
<div class="t" style="left:62px;top:17.54px;color:#14141c;transform:scale(0.835,0.97);transform-origin:0 9.46px">Sloupce</div>
<div style="left:0px;top:31px;width:1.2px;height:15px;background:#ececec"></div>
<div class="t b" style="right:486px;top:47.53px;font-weight:bold;color:#14141c;transform:scale(0.89,0.97);transform-origin:100% 9.46px">Vzor:</div>
<div style="left:198px;top:46.5px;width:243px;height:15.0px;background:#fff;border:1.6px solid #7183a4;border-radius:3px;box-sizing:border-box;box-shadow:0.8px 0.8px 0 #f2f2f2"></div>
<div style="left:429.8px;top:48.7px;width:10.0px;height:11.599999999999994px;background:#d0d0d0"></div>
<div style="left:431.5px;top:53.0px;width:0;height:0;border-left:3px solid transparent;border-right:3px solid transparent;border-top:3.5px solid #5b6f96"></div>
<div class="t" style="left:201.6px;top:48.23px;color:#14141c;transform:scale(0.835,0.97);transform-origin:0 9.46px">Saldo jiných pohledávek &nbsp;&nbsp;()&nbsp;&nbsp; [Systémové]</div>
<div style="left:450px;top:49.0px;width:10px;height:10px;box-sizing:border-box;background:#fff;border-top:1.5px solid #505b72;border-left:1.5px solid #505b72;border-right:1px solid #e4e4e4;border-bottom:1px solid #e4e4e4;border-radius:1.5px;box-shadow:0.6px 0.6px 0 #f4f4f4"></div>
<div class="t b" style="left:463.2px;top:48.53px;font-weight:bold;color:#14141c;transform:scale(0.93,0.97);transform-origin:0 9.46px">Veřejný</div>
<div style="left:504.5px;top:46.8px;width:47.5px;height:14.200000000000003px;box-sizing:border-box;background:#d9d9d9;border-top:1px solid #fafafa;border-left:1px solid #fafafa;border-right:1.5px solid #8393b0;border-bottom:1.5px solid #8393b0;border-radius:2px"></div>
<div class="t" style="left:428.25px;width:200px;text-align:center;top:48.08px;font-size:9px;color:#97a3bd;transform:scale(0.86,0.97);transform-origin:50% 9.12px">Uložit</div>
<div style="left:564.3px;top:46.8px;width:47.200000000000045px;height:14.200000000000003px;box-sizing:border-box;background:#d9d9d9;border-top:1px solid #fafafa;border-left:1px solid #fafafa;border-right:1.5px solid #8393b0;border-bottom:1.5px solid #8393b0;border-radius:2px"></div>
<div class="t b" style="left:487.9px;width:200px;text-align:center;top:48.08px;font-size:9px;font-weight:bold;color:#14141c;transform:scale(0.86,0.97);transform-origin:50% 9.12px">Uložit jako</div>
<div style="left:624px;top:46.8px;width:47.5px;height:14.200000000000003px;box-sizing:border-box;background:#d9d9d9;border-top:1px solid #fafafa;border-left:1px solid #fafafa;border-right:1.5px solid #8393b0;border-bottom:1.5px solid #8393b0;border-radius:2px"></div>
<div class="t" style="left:547.75px;width:200px;text-align:center;top:48.08px;font-size:9px;color:#97a3bd;transform:scale(0.86,0.97);transform-origin:50% 9.12px">Odstranit</div>
<div class="t b" style="right:485px;top:65.33px;font-weight:bold;color:#14141c;transform:scale(0.89,0.97);transform-origin:100% 9.46px">Nadpis:</div>
<div style="left:196.8px;top:63.8px;width:440.09999999999997px;height:15.200000000000003px;box-sizing:border-box;background:#fff;border:1.5px solid #e54446;box-shadow:0 0 0 0.8px #d3ecec"></div>
<div class="t" style="left:199px;top:65.73px;color:#14141c;transform:scale(0.845,0.97);transform-origin:0 9.46px">Saldo jiných pohledávek</div>
<div class="t b" style="left:309.4px;top:81.53px;font-weight:bold;color:#14141c;transform:scale(0.89,0.97);transform-origin:0 9.46px">Stránkovat</div>
<div class="t b" style="left:360px;top:81.53px;font-weight:bold;color:#14141c;transform:scale(0.89,0.97);transform-origin:0 9.46px">Součet</div>
<div class="t b" style="left:398px;top:81.53px;font-weight:bold;color:#14141c;transform:scale(0.89,0.97);transform-origin:0 9.46px">Název skupiny</div>
<div class="t b" style="left:625.6px;top:81.53px;font-weight:bold;color:#14141c;transform:scale(0.89,0.97);transform-origin:0 9.46px">Sestupně</div>
<div class="t b" style="right:485px;top:97.83px;font-weight:bold;color:#14141c;transform:scale(0.89,0.97);transform-origin:100% 9.46px">Skupina 1:</div>
<div style="left:197.2px;top:96.3px;width:124.0px;height:15.099999999999994px;background:#fff;border:1.6px solid #7183a4;border-radius:3px;box-sizing:border-box;box-shadow:0.8px 0.8px 0 #f2f2f2"></div>
<div style="left:310.0px;top:98.5px;width:10.0px;height:11.699999999999989px;background:#d0d0d0"></div>
<div style="left:311.7px;top:102.85px;width:0;height:0;border-left:3px solid transparent;border-right:3px solid transparent;border-top:3.5px solid #5b6f96"></div>
<div class="t" style="left:200.79999999999998px;top:98.44px;color:#14141c;transform:scale(0.835,0.97);transform-origin:0 9.46px">Účetní pravidlo</div>
<div style="left:338px;top:98.60000000000001px;width:10px;height:10px;box-sizing:border-box;background:#fff;border-top:1.5px solid #505b72;border-left:1.5px solid #505b72;border-right:1px solid #e4e4e4;border-bottom:1px solid #e4e4e4;border-radius:1.5px;box-shadow:0.6px 0.6px 0 #f4f4f4"></div>
<div style="left:365px;top:98.60000000000001px;width:10px;height:10px;box-sizing:border-box;background:#fff;border-top:1.5px solid #505b72;border-left:1.5px solid #505b72;border-right:1px solid #e4e4e4;border-bottom:1px solid #e4e4e4;border-radius:1.5px;box-shadow:0.6px 0.6px 0 #f4f4f4"></div>
<svg style="left:365px;top:99.10000000000001px" width="11" height="10" viewBox="0 0 11 10"><path d="M2.2 5.2 L4.4 7.6 L9.2 2.2" fill="none" stroke="#1a2236" stroke-width="1.8"/></svg>
<div style="left:398.2px;top:96.3px;width:222.8px;height:14.099999999999994px;background:#fff;border-top:2px solid #7b8caa;border-left:2px solid #7b8caa;border-right:1px solid #e8e8e8;border-bottom:1px solid #e8e8e8;border-radius:2.5px;box-sizing:border-box;box-shadow:0.6px 0.6px 0 #f6f6f6"></div>
<div class="t" style="left:401.0px;top:98.33px;color:#14141c;transform:scale(0.835,0.97);transform-origin:0 9.46px">Účetní pravidlo</div>
<div style="left:636.8px;top:98.60000000000001px;width:10px;height:10px;box-sizing:border-box;background:#fff;border-top:1.5px solid #505b72;border-left:1.5px solid #505b72;border-right:1px solid #e4e4e4;border-bottom:1px solid #e4e4e4;border-radius:1.5px;box-shadow:0.6px 0.6px 0 #f4f4f4"></div>
<div class="t b" style="right:485px;top:114.36px;font-weight:bold;color:#14141c;transform:scale(0.89,0.97);transform-origin:100% 9.46px">Skupina 2:</div>
<div style="left:197.2px;top:112.83px;width:124.0px;height:15.099999999999994px;background:#fff;border:1.6px solid #7183a4;border-radius:3px;box-sizing:border-box;box-shadow:0.8px 0.8px 0 #f2f2f2"></div>
<div style="left:310.0px;top:115.03px;width:10.0px;height:11.699999999999989px;background:#d0d0d0"></div>
<div style="left:311.7px;top:119.38px;width:0;height:0;border-left:3px solid transparent;border-right:3px solid transparent;border-top:3.5px solid #5b6f96"></div>
<div class="t" style="left:200.79999999999998px;top:114.97px;color:#14141c;transform:scale(0.835,0.97);transform-origin:0 9.46px">Neuvedeno</div>
<div style="left:338px;top:115.13000000000001px;width:10px;height:10px;box-sizing:border-box;background:#fff;border-top:1.5px solid #505b72;border-left:1.5px solid #505b72;border-right:1px solid #e4e4e4;border-bottom:1px solid #e4e4e4;border-radius:1.5px;box-shadow:0.6px 0.6px 0 #f4f4f4"></div>
<div style="left:365px;top:115.13000000000001px;width:10px;height:10px;box-sizing:border-box;background:#fff;border-top:1.5px solid #505b72;border-left:1.5px solid #505b72;border-right:1px solid #e4e4e4;border-bottom:1px solid #e4e4e4;border-radius:1.5px;box-shadow:0.6px 0.6px 0 #f4f4f4"></div>
<svg style="left:365px;top:115.63000000000001px" width="11" height="10" viewBox="0 0 11 10"><path d="M2.2 5.2 L4.4 7.6 L9.2 2.2" fill="none" stroke="#1a2236" stroke-width="1.8"/></svg>
<div style="left:398.2px;top:112.83px;width:222.8px;height:14.099999999999994px;background:#fff;border-top:2px solid #7b8caa;border-left:2px solid #7b8caa;border-right:1px solid #e8e8e8;border-bottom:1px solid #e8e8e8;border-radius:2.5px;box-sizing:border-box;box-shadow:0.6px 0.6px 0 #f6f6f6"></div>
<div style="left:636.8px;top:115.13000000000001px;width:10px;height:10px;box-sizing:border-box;background:#fff;border-top:1.5px solid #505b72;border-left:1.5px solid #505b72;border-right:1px solid #e4e4e4;border-bottom:1px solid #e4e4e4;border-radius:1.5px;box-shadow:0.6px 0.6px 0 #f4f4f4"></div>
<div class="t b" style="right:485px;top:130.89px;font-weight:bold;color:#14141c;transform:scale(0.89,0.97);transform-origin:100% 9.46px">Skupina 3:</div>
<div style="left:197.2px;top:129.35999999999999px;width:124.0px;height:15.099999999999994px;background:#fff;border:1.6px solid #7183a4;border-radius:3px;box-sizing:border-box;box-shadow:0.8px 0.8px 0 #f2f2f2"></div>
<div style="left:310.0px;top:131.55999999999997px;width:10.0px;height:11.700000000000017px;background:#d0d0d0"></div>
<div style="left:311.7px;top:135.90999999999997px;width:0;height:0;border-left:3px solid transparent;border-right:3px solid transparent;border-top:3.5px solid #5b6f96"></div>
<div class="t" style="left:200.79999999999998px;top:131.49px;color:#14141c;transform:scale(0.835,0.97);transform-origin:0 9.46px">Neuvedeno</div>
<div style="left:338px;top:131.66px;width:10px;height:10px;box-sizing:border-box;background:#fff;border-top:1.5px solid #505b72;border-left:1.5px solid #505b72;border-right:1px solid #e4e4e4;border-bottom:1px solid #e4e4e4;border-radius:1.5px;box-shadow:0.6px 0.6px 0 #f4f4f4"></div>
<div style="left:365px;top:131.66px;width:10px;height:10px;box-sizing:border-box;background:#fff;border-top:1.5px solid #505b72;border-left:1.5px solid #505b72;border-right:1px solid #e4e4e4;border-bottom:1px solid #e4e4e4;border-radius:1.5px;box-shadow:0.6px 0.6px 0 #f4f4f4"></div>
<div style="left:398.2px;top:129.35999999999999px;width:222.8px;height:14.099999999999994px;background:#fff;border-top:2px solid #7b8caa;border-left:2px solid #7b8caa;border-right:1px solid #e8e8e8;border-bottom:1px solid #e8e8e8;border-radius:2.5px;box-sizing:border-box;box-shadow:0.6px 0.6px 0 #f6f6f6"></div>
<div style="left:636.8px;top:131.66px;width:10px;height:10px;box-sizing:border-box;background:#fff;border-top:1.5px solid #505b72;border-left:1.5px solid #505b72;border-right:1px solid #e4e4e4;border-bottom:1px solid #e4e4e4;border-radius:1.5px;box-shadow:0.6px 0.6px 0 #f4f4f4"></div>
<div class="t b" style="right:485px;top:147.43px;font-weight:bold;color:#14141c;transform:scale(0.89,0.97);transform-origin:100% 9.46px">Skupina 4:</div>
<div style="left:197.2px;top:145.89000000000001px;width:124.0px;height:15.099999999999994px;background:#fff;border:1.6px solid #7183a4;border-radius:3px;box-sizing:border-box;box-shadow:0.8px 0.8px 0 #f2f2f2"></div>
<div style="left:310.0px;top:148.09px;width:10.0px;height:11.700000000000017px;background:#d0d0d0"></div>
<div style="left:311.7px;top:152.44px;width:0;height:0;border-left:3px solid transparent;border-right:3px solid transparent;border-top:3.5px solid #5b6f96"></div>
<div class="t" style="left:200.79999999999998px;top:148.03px;color:#14141c;transform:scale(0.835,0.97);transform-origin:0 9.46px">Neuvedeno</div>
<div style="left:338px;top:148.19000000000003px;width:10px;height:10px;box-sizing:border-box;background:#fff;border-top:1.5px solid #505b72;border-left:1.5px solid #505b72;border-right:1px solid #e4e4e4;border-bottom:1px solid #e4e4e4;border-radius:1.5px;box-shadow:0.6px 0.6px 0 #f4f4f4"></div>
<div style="left:365px;top:148.19000000000003px;width:10px;height:10px;box-sizing:border-box;background:#fff;border-top:1.5px solid #505b72;border-left:1.5px solid #505b72;border-right:1px solid #e4e4e4;border-bottom:1px solid #e4e4e4;border-radius:1.5px;box-shadow:0.6px 0.6px 0 #f4f4f4"></div>
<div style="left:398.2px;top:145.89000000000001px;width:222.8px;height:14.099999999999994px;background:#fff;border-top:2px solid #7b8caa;border-left:2px solid #7b8caa;border-right:1px solid #e8e8e8;border-bottom:1px solid #e8e8e8;border-radius:2.5px;box-sizing:border-box;box-shadow:0.6px 0.6px 0 #f6f6f6"></div>
<div style="left:636.8px;top:148.19000000000003px;width:10px;height:10px;box-sizing:border-box;background:#fff;border-top:1.5px solid #505b72;border-left:1.5px solid #505b72;border-right:1px solid #e4e4e4;border-bottom:1px solid #e4e4e4;border-radius:1.5px;box-shadow:0.6px 0.6px 0 #f4f4f4"></div>
<div class="t b" style="left:335.4px;top:163.03px;font-weight:bold;color:#14141c;transform:scale(0.89,0.97);transform-origin:0 9.46px">Délka</div>
<div class="t b" style="left:398px;top:163.03px;font-weight:bold;color:#14141c;transform:scale(0.89,0.97);transform-origin:0 9.46px">Název sloupce</div>
<div class="t b" style="left:625.6px;top:163.03px;font-weight:bold;color:#14141c;transform:scale(0.89,0.97);transform-origin:0 9.46px">Sestupně</div>
<div class="t b" style="right:485px;top:179.23px;font-weight:bold;color:#14141c;transform:scale(0.89,0.97);transform-origin:100% 9.46px">1. sloupec:</div>
<div style="left:197.2px;top:177.79999999999998px;width:124.0px;height:14.300000000000011px;background:#fff;border:1.6px solid #7183a4;border-radius:3px;box-sizing:border-box;box-shadow:0.8px 0.8px 0 #f2f2f2"></div>
<div style="left:310.0px;top:179.99999999999997px;width:10.0px;height:10.900000000000034px;background:#d0d0d0"></div>
<div style="left:311.7px;top:183.95px;width:0;height:0;border-left:3px solid transparent;border-right:3px solid transparent;border-top:3.5px solid #5b6f96"></div>
<div class="t" style="left:200.79999999999998px;top:179.93px;color:#14141c;transform:scale(0.835,0.97);transform-origin:0 9.46px">Externí číslo</div>
<div style="left:338.8px;top:177.79999999999998px;width:16.19999999999999px;height:13.900000000000006px;background:#fff;border-top:2px solid #7b8caa;border-left:2px solid #7b8caa;border-right:1px solid #e8e8e8;border-bottom:1px solid #e8e8e8;border-radius:2.5px;box-sizing:border-box;box-shadow:0.6px 0.6px 0 #f6f6f6"></div>
<div class="t" style="right:326.8px;top:179.83px;color:#14141c;transform:scale(0.95,0.97);transform-origin:100% 9.46px">10</div>
<div style="left:398.2px;top:177.79999999999998px;width:222.8px;height:13.900000000000006px;background:#fff;border-top:2px solid #7b8caa;border-left:2px solid #7b8caa;border-right:1px solid #e8e8e8;border-bottom:1px solid #e8e8e8;border-radius:2.5px;box-sizing:border-box;box-shadow:0.6px 0.6px 0 #f6f6f6"></div>
<div class="t" style="left:401.0px;top:179.83px;color:#14141c;transform:scale(0.835,0.97);transform-origin:0 9.46px">Ext.číslo</div>
<div style="left:636.8px;top:180.5px;width:10px;height:10px;box-sizing:border-box;background:#fff;border-top:1.5px solid #505b72;border-left:1.5px solid #505b72;border-right:1px solid #e4e4e4;border-bottom:1px solid #e4e4e4;border-radius:1.5px;box-shadow:0.6px 0.6px 0 #f4f4f4"></div>
<div class="t b" style="right:485px;top:195.58px;font-weight:bold;color:#14141c;transform:scale(0.89,0.97);transform-origin:100% 9.46px">2. sloupec:</div>
<div style="left:197.2px;top:194.14999999999998px;width:124.0px;height:14.300000000000011px;background:#fff;border:1.6px solid #7183a4;border-radius:3px;box-sizing:border-box;box-shadow:0.8px 0.8px 0 #f2f2f2"></div>
<div style="left:310.0px;top:196.34999999999997px;width:10.0px;height:10.900000000000034px;background:#d0d0d0"></div>
<div style="left:311.7px;top:200.29999999999998px;width:0;height:0;border-left:3px solid transparent;border-right:3px solid transparent;border-top:3.5px solid #5b6f96"></div>
<div class="t" style="left:200.79999999999998px;top:196.28px;color:#14141c;transform:scale(0.835,0.97);transform-origin:0 9.46px">Jméno</div>
<div style="left:338.8px;top:194.14999999999998px;width:16.19999999999999px;height:13.900000000000006px;background:#fff;border-top:2px solid #7b8caa;border-left:2px solid #7b8caa;border-right:1px solid #e8e8e8;border-bottom:1px solid #e8e8e8;border-radius:2.5px;box-sizing:border-box;box-shadow:0.6px 0.6px 0 #f6f6f6"></div>
<div class="t" style="right:326.8px;top:196.18px;color:#14141c;transform:scale(0.95,0.97);transform-origin:100% 9.46px">17</div>
<div style="left:398.2px;top:194.14999999999998px;width:222.8px;height:13.900000000000006px;background:#fff;border-top:2px solid #7b8caa;border-left:2px solid #7b8caa;border-right:1px solid #e8e8e8;border-bottom:1px solid #e8e8e8;border-radius:2.5px;box-sizing:border-box;box-shadow:0.6px 0.6px 0 #f6f6f6"></div>
<div class="t" style="left:401.0px;top:196.18px;color:#14141c;transform:scale(0.835,0.97);transform-origin:0 9.46px">Jméno</div>
<div style="left:636.8px;top:196.85px;width:10px;height:10px;box-sizing:border-box;background:#fff;border-top:1.5px solid #505b72;border-left:1.5px solid #505b72;border-right:1px solid #e4e4e4;border-bottom:1px solid #e4e4e4;border-radius:1.5px;box-shadow:0.6px 0.6px 0 #f4f4f4"></div>
<div class="t b" style="right:485px;top:211.93px;font-weight:bold;color:#14141c;transform:scale(0.89,0.97);transform-origin:100% 9.46px">3. sloupec:</div>
<div style="left:197.2px;top:210.49999999999997px;width:124.0px;height:14.300000000000011px;background:#fff;border:1.6px solid #7183a4;border-radius:3px;box-sizing:border-box;box-shadow:0.8px 0.8px 0 #f2f2f2"></div>
<div style="left:310.0px;top:212.69999999999996px;width:10.0px;height:10.900000000000034px;background:#d0d0d0"></div>
<div style="left:311.7px;top:216.64999999999998px;width:0;height:0;border-left:3px solid transparent;border-right:3px solid transparent;border-top:3.5px solid #5b6f96"></div>
<div class="t" style="left:200.79999999999998px;top:212.63px;color:#14141c;transform:scale(0.835,0.97);transform-origin:0 9.46px">Stav salda</div>
<div style="left:338.8px;top:210.49999999999997px;width:16.19999999999999px;height:13.900000000000006px;background:#fff;border-top:2px solid #7b8caa;border-left:2px solid #7b8caa;border-right:1px solid #e8e8e8;border-bottom:1px solid #e8e8e8;border-radius:2.5px;box-sizing:border-box;box-shadow:0.6px 0.6px 0 #f6f6f6"></div>
<div class="t" style="right:326.8px;top:212.53px;color:#14141c;transform:scale(0.95,0.97);transform-origin:100% 9.46px">1</div>
<div style="left:398.2px;top:210.49999999999997px;width:222.8px;height:13.900000000000006px;background:#fff;border-top:2px solid #7b8caa;border-left:2px solid #7b8caa;border-right:1px solid #e8e8e8;border-bottom:1px solid #e8e8e8;border-radius:2.5px;box-sizing:border-box;box-shadow:0.6px 0.6px 0 #f6f6f6"></div>
<div class="t" style="left:401.0px;top:212.53px;color:#14141c;transform:scale(0.835,0.97);transform-origin:0 9.46px">S</div>
<div style="left:636.8px;top:213.2px;width:10px;height:10px;box-sizing:border-box;background:#fff;border-top:1.5px solid #505b72;border-left:1.5px solid #505b72;border-right:1px solid #e4e4e4;border-bottom:1px solid #e4e4e4;border-radius:1.5px;box-shadow:0.6px 0.6px 0 #f4f4f4"></div>
<div class="t b" style="right:485px;top:228.28px;font-weight:bold;color:#14141c;transform:scale(0.89,0.97);transform-origin:100% 9.46px">4. sloupec:</div>
<div style="left:197.2px;top:226.85px;width:124.0px;height:14.300000000000011px;background:#fff;border:1.6px solid #7183a4;border-radius:3px;box-sizing:border-box;box-shadow:0.8px 0.8px 0 #f2f2f2"></div>
<div style="left:310.0px;top:229.04999999999998px;width:10.0px;height:10.900000000000034px;background:#d0d0d0"></div>
<div style="left:311.7px;top:233.0px;width:0;height:0;border-left:3px solid transparent;border-right:3px solid transparent;border-top:3.5px solid #5b6f96"></div>
<div class="t" style="left:200.79999999999998px;top:228.98px;color:#14141c;transform:scale(0.835,0.97);transform-origin:0 9.46px">Číslo dokladu</div>
<div style="left:338.8px;top:226.85px;width:16.19999999999999px;height:13.900000000000006px;background:#fff;border-top:2px solid #7b8caa;border-left:2px solid #7b8caa;border-right:1px solid #e8e8e8;border-bottom:1px solid #e8e8e8;border-radius:2.5px;box-sizing:border-box;box-shadow:0.6px 0.6px 0 #f6f6f6"></div>
<div class="t" style="right:326.8px;top:228.88px;color:#14141c;transform:scale(0.95,0.97);transform-origin:100% 9.46px">10</div>
<div style="left:398.2px;top:226.85px;width:222.8px;height:13.900000000000006px;background:#fff;border-top:2px solid #7b8caa;border-left:2px solid #7b8caa;border-right:1px solid #e8e8e8;border-bottom:1px solid #e8e8e8;border-radius:2.5px;box-sizing:border-box;box-shadow:0.6px 0.6px 0 #f6f6f6"></div>
<div class="t" style="left:401.0px;top:228.88px;color:#14141c;transform:scale(0.835,0.97);transform-origin:0 9.46px">Č.dokladu</div>
<div style="left:636.8px;top:229.55px;width:10px;height:10px;box-sizing:border-box;background:#fff;border-top:1.5px solid #505b72;border-left:1.5px solid #505b72;border-right:1px solid #e4e4e4;border-bottom:1px solid #e4e4e4;border-radius:1.5px;box-shadow:0.6px 0.6px 0 #f4f4f4"></div>
<div class="t b" style="right:485px;top:244.63px;font-weight:bold;color:#14141c;transform:scale(0.89,0.97);transform-origin:100% 9.46px">5. sloupec:</div>
<div style="left:197.2px;top:243.2px;width:124.0px;height:14.300000000000011px;background:#fff;border:1.6px solid #7183a4;border-radius:3px;box-sizing:border-box;box-shadow:0.8px 0.8px 0 #f2f2f2"></div>
<div style="left:310.0px;top:245.39999999999998px;width:10.0px;height:10.900000000000034px;background:#d0d0d0"></div>
<div style="left:311.7px;top:249.35px;width:0;height:0;border-left:3px solid transparent;border-right:3px solid transparent;border-top:3.5px solid #5b6f96"></div>
<div class="t" style="left:200.79999999999998px;top:245.33px;color:#14141c;transform:scale(0.835,0.97);transform-origin:0 9.46px">Variabilní symbol</div>
<div style="left:338.8px;top:243.2px;width:16.19999999999999px;height:13.899999999999977px;background:#fff;border-top:2px solid #7b8caa;border-left:2px solid #7b8caa;border-right:1px solid #e8e8e8;border-bottom:1px solid #e8e8e8;border-radius:2.5px;box-sizing:border-box;box-shadow:0.6px 0.6px 0 #f6f6f6"></div>
<div class="t" style="right:326.8px;top:245.23px;color:#14141c;transform:scale(0.95,0.97);transform-origin:100% 9.46px">10</div>
<div style="left:398.2px;top:243.2px;width:222.8px;height:13.899999999999977px;background:#fff;border-top:2px solid #7b8caa;border-left:2px solid #7b8caa;border-right:1px solid #e8e8e8;border-bottom:1px solid #e8e8e8;border-radius:2.5px;box-sizing:border-box;box-shadow:0.6px 0.6px 0 #f6f6f6"></div>
<div class="t" style="left:401.0px;top:245.23px;color:#14141c;transform:scale(0.835,0.97);transform-origin:0 9.46px">VSMB</div>
<div style="left:636.8px;top:245.9px;width:10px;height:10px;box-sizing:border-box;background:#fff;border-top:1.5px solid #505b72;border-left:1.5px solid #505b72;border-right:1px solid #e4e4e4;border-bottom:1px solid #e4e4e4;border-radius:1.5px;box-shadow:0.6px 0.6px 0 #f4f4f4"></div>
<div class="t b" style="right:485px;top:260.99px;font-weight:bold;color:#14141c;transform:scale(0.89,0.97);transform-origin:100% 9.46px">6. sloupec:</div>
<div style="left:197.2px;top:259.55px;width:124.0px;height:14.300000000000011px;background:#fff;border:1.6px solid #7183a4;border-radius:3px;box-sizing:border-box;box-shadow:0.8px 0.8px 0 #f2f2f2"></div>
<div style="left:310.0px;top:261.75px;width:10.0px;height:10.900000000000034px;background:#d0d0d0"></div>
<div style="left:311.7px;top:265.70000000000005px;width:0;height:0;border-left:3px solid transparent;border-right:3px solid transparent;border-top:3.5px solid #5b6f96"></div>
<div class="t" style="left:200.79999999999998px;top:261.69px;color:#14141c;transform:scale(0.835,0.97);transform-origin:0 9.46px">Specifický symbol</div>
<div style="left:338.8px;top:259.55px;width:16.19999999999999px;height:13.899999999999977px;background:#fff;border-top:2px solid #7b8caa;border-left:2px solid #7b8caa;border-right:1px solid #e8e8e8;border-bottom:1px solid #e8e8e8;border-radius:2.5px;box-sizing:border-box;box-shadow:0.6px 0.6px 0 #f6f6f6"></div>
<div class="t" style="right:326.8px;top:261.59px;color:#14141c;transform:scale(0.95,0.97);transform-origin:100% 9.46px">10</div>
<div style="left:398.2px;top:259.55px;width:222.8px;height:13.899999999999977px;background:#fff;border-top:2px solid #7b8caa;border-left:2px solid #7b8caa;border-right:1px solid #e8e8e8;border-bottom:1px solid #e8e8e8;border-radius:2.5px;box-sizing:border-box;box-shadow:0.6px 0.6px 0 #f6f6f6"></div>
<div class="t" style="left:401.0px;top:261.59px;color:#14141c;transform:scale(0.835,0.97);transform-origin:0 9.46px">SSMB</div>
<div style="left:636.8px;top:262.25px;width:10px;height:10px;box-sizing:border-box;background:#fff;border-top:1.5px solid #505b72;border-left:1.5px solid #505b72;border-right:1px solid #e4e4e4;border-bottom:1px solid #e4e4e4;border-radius:1.5px;box-shadow:0.6px 0.6px 0 #f4f4f4"></div>
<div class="t b" style="right:485px;top:277.34px;font-weight:bold;color:#14141c;transform:scale(0.89,0.97);transform-origin:100% 9.46px">7. sloupec:</div>
<div style="left:197.2px;top:275.90000000000003px;width:124.0px;height:14.300000000000011px;background:#fff;border:1.6px solid #7183a4;border-radius:3px;box-sizing:border-box;box-shadow:0.8px 0.8px 0 #f2f2f2"></div>
<div style="left:310.0px;top:278.1px;width:10.0px;height:10.900000000000034px;background:#d0d0d0"></div>
<div style="left:311.7px;top:282.05000000000007px;width:0;height:0;border-left:3px solid transparent;border-right:3px solid transparent;border-top:3.5px solid #5b6f96"></div>
<div class="t" style="left:200.79999999999998px;top:278.04px;color:#14141c;transform:scale(0.835,0.97);transform-origin:0 9.46px">Datum vystavení</div>
<div style="left:338.8px;top:275.90000000000003px;width:16.19999999999999px;height:13.899999999999977px;background:#fff;border-top:2px solid #7b8caa;border-left:2px solid #7b8caa;border-right:1px solid #e8e8e8;border-bottom:1px solid #e8e8e8;border-radius:2.5px;box-sizing:border-box;box-shadow:0.6px 0.6px 0 #f6f6f6"></div>
<div class="t" style="right:326.8px;top:277.94px;color:#14141c;transform:scale(0.95,0.97);transform-origin:100% 9.46px">8</div>
<div style="left:398.2px;top:275.90000000000003px;width:222.8px;height:13.899999999999977px;background:#fff;border-top:2px solid #7b8caa;border-left:2px solid #7b8caa;border-right:1px solid #e8e8e8;border-bottom:1px solid #e8e8e8;border-radius:2.5px;box-sizing:border-box;box-shadow:0.6px 0.6px 0 #f6f6f6"></div>
<div class="t" style="left:401.0px;top:277.94px;color:#14141c;transform:scale(0.835,0.97);transform-origin:0 9.46px">Zapsáno</div>
<div style="left:636.8px;top:278.6px;width:10px;height:10px;box-sizing:border-box;background:#fff;border-top:1.5px solid #505b72;border-left:1.5px solid #505b72;border-right:1px solid #e4e4e4;border-bottom:1px solid #e4e4e4;border-radius:1.5px;box-shadow:0.6px 0.6px 0 #f4f4f4"></div>
<div class="t b" style="right:485px;top:293.69px;font-weight:bold;color:#14141c;transform:scale(0.89,0.97);transform-origin:100% 9.46px">8. sloupec:</div>
<div style="left:197.2px;top:292.25px;width:124.0px;height:14.300000000000011px;background:#fff;border:1.6px solid #7183a4;border-radius:3px;box-sizing:border-box;box-shadow:0.8px 0.8px 0 #f2f2f2"></div>
<div style="left:310.0px;top:294.45px;width:10.0px;height:10.900000000000034px;background:#d0d0d0"></div>
<div style="left:311.7px;top:298.4px;width:0;height:0;border-left:3px solid transparent;border-right:3px solid transparent;border-top:3.5px solid #5b6f96"></div>
<div class="t" style="left:200.79999999999998px;top:294.38px;color:#14141c;transform:scale(0.835,0.97);transform-origin:0 9.46px">Číslo střediska</div>
<div style="left:338.8px;top:292.25px;width:16.19999999999999px;height:13.899999999999977px;background:#fff;border-top:2px solid #7b8caa;border-left:2px solid #7b8caa;border-right:1px solid #e8e8e8;border-bottom:1px solid #e8e8e8;border-radius:2.5px;box-sizing:border-box;box-shadow:0.6px 0.6px 0 #f6f6f6"></div>
<div class="t" style="right:326.8px;top:294.29px;color:#14141c;transform:scale(0.95,0.97);transform-origin:100% 9.46px">10</div>
<div style="left:398.2px;top:292.25px;width:222.8px;height:13.899999999999977px;background:#fff;border-top:2px solid #7b8caa;border-left:2px solid #7b8caa;border-right:1px solid #e8e8e8;border-bottom:1px solid #e8e8e8;border-radius:2.5px;box-sizing:border-box;box-shadow:0.6px 0.6px 0 #f6f6f6"></div>
<div class="t" style="left:401.0px;top:294.29px;color:#14141c;transform:scale(0.835,0.97);transform-origin:0 9.46px">NS</div>
<div style="left:636.8px;top:294.95px;width:10px;height:10px;box-sizing:border-box;background:#fff;border-top:1.5px solid #505b72;border-left:1.5px solid #505b72;border-right:1px solid #e4e4e4;border-bottom:1px solid #e4e4e4;border-radius:1.5px;box-shadow:0.6px 0.6px 0 #f4f4f4"></div>
<div class="t b" style="right:485px;top:310.04px;font-weight:bold;color:#14141c;transform:scale(0.89,0.97);transform-origin:100% 9.46px">9. sloupec:</div>
<div style="left:197.2px;top:308.6px;width:124.0px;height:14.300000000000011px;background:#fff;border:1.6px solid #7183a4;border-radius:3px;box-sizing:border-box;box-shadow:0.8px 0.8px 0 #f2f2f2"></div>
<div style="left:310.0px;top:310.8px;width:10.0px;height:10.900000000000034px;background:#d0d0d0"></div>
<div style="left:311.7px;top:314.75px;width:0;height:0;border-left:3px solid transparent;border-right:3px solid transparent;border-top:3.5px solid #5b6f96"></div>
<div class="t" style="left:200.79999999999998px;top:310.74px;color:#14141c;transform:scale(0.835,0.97);transform-origin:0 9.46px">Typ akce</div>
<div style="left:338.8px;top:308.6px;width:16.19999999999999px;height:13.899999999999977px;background:#fff;border-top:2px solid #7b8caa;border-left:2px solid #7b8caa;border-right:1px solid #e8e8e8;border-bottom:1px solid #e8e8e8;border-radius:2.5px;box-sizing:border-box;box-shadow:0.6px 0.6px 0 #f6f6f6"></div>
<div class="t" style="right:326.8px;top:310.64px;color:#14141c;transform:scale(0.95,0.97);transform-origin:100% 9.46px">3</div>
<div style="left:398.2px;top:308.6px;width:222.8px;height:13.899999999999977px;background:#fff;border-top:2px solid #7b8caa;border-left:2px solid #7b8caa;border-right:1px solid #e8e8e8;border-bottom:1px solid #e8e8e8;border-radius:2.5px;box-sizing:border-box;box-shadow:0.6px 0.6px 0 #f6f6f6"></div>
<div class="t" style="left:401.0px;top:310.64px;color:#14141c;transform:scale(0.835,0.97);transform-origin:0 9.46px">TA</div>
<div style="left:636.8px;top:311.3px;width:10px;height:10px;box-sizing:border-box;background:#fff;border-top:1.5px solid #505b72;border-left:1.5px solid #505b72;border-right:1px solid #e4e4e4;border-bottom:1px solid #e4e4e4;border-radius:1.5px;box-shadow:0.6px 0.6px 0 #f4f4f4"></div>
<div class="t b" style="right:485px;top:326.39px;font-weight:bold;color:#14141c;transform:scale(0.89,0.97);transform-origin:100% 9.46px">10. sloupec:</div>
<div style="left:197.2px;top:324.95000000000005px;width:124.0px;height:14.300000000000011px;background:#fff;border:1.6px solid #7183a4;border-radius:3px;box-sizing:border-box;box-shadow:0.8px 0.8px 0 #f2f2f2"></div>
<div style="left:310.0px;top:327.15000000000003px;width:10.0px;height:10.900000000000034px;background:#d0d0d0"></div>
<div style="left:311.7px;top:331.1px;width:0;height:0;border-left:3px solid transparent;border-right:3px solid transparent;border-top:3.5px solid #5b6f96"></div>
<div class="t" style="left:200.79999999999998px;top:327.09px;color:#14141c;transform:scale(0.835,0.97);transform-origin:0 9.46px">Akce</div>
<div style="left:338.8px;top:324.95000000000005px;width:16.19999999999999px;height:13.899999999999977px;background:#fff;border-top:2px solid #7b8caa;border-left:2px solid #7b8caa;border-right:1px solid #e8e8e8;border-bottom:1px solid #e8e8e8;border-radius:2.5px;box-sizing:border-box;box-shadow:0.6px 0.6px 0 #f6f6f6"></div>
<div class="t" style="right:326.8px;top:326.99px;color:#14141c;transform:scale(0.95,0.97);transform-origin:100% 9.46px">10</div>
<div style="left:398.2px;top:324.95000000000005px;width:222.8px;height:13.899999999999977px;background:#fff;border-top:2px solid #7b8caa;border-left:2px solid #7b8caa;border-right:1px solid #e8e8e8;border-bottom:1px solid #e8e8e8;border-radius:2.5px;box-sizing:border-box;box-shadow:0.6px 0.6px 0 #f6f6f6"></div>
<div class="t" style="left:401.0px;top:326.99px;color:#14141c;transform:scale(0.835,0.97);transform-origin:0 9.46px">Akce</div>
<div style="left:636.8px;top:327.65000000000003px;width:10px;height:10px;box-sizing:border-box;background:#fff;border-top:1.5px solid #505b72;border-left:1.5px solid #505b72;border-right:1px solid #e4e4e4;border-bottom:1px solid #e4e4e4;border-radius:1.5px;box-shadow:0.6px 0.6px 0 #f4f4f4"></div>
<div class="t b" style="right:485px;top:342.74px;font-weight:bold;color:#14141c;transform:scale(0.89,0.97);transform-origin:100% 9.46px">11. sloupec:</div>
<div style="left:197.2px;top:341.3px;width:124.0px;height:14.300000000000011px;background:#fff;border:1.6px solid #7183a4;border-radius:3px;box-sizing:border-box;box-shadow:0.8px 0.8px 0 #f2f2f2"></div>
<div style="left:310.0px;top:343.5px;width:10.0px;height:10.900000000000034px;background:#d0d0d0"></div>
<div style="left:311.7px;top:347.45000000000005px;width:0;height:0;border-left:3px solid transparent;border-right:3px solid transparent;border-top:3.5px solid #5b6f96"></div>
<div class="t" style="left:200.79999999999998px;top:343.44px;color:#14141c;transform:scale(0.835,0.97);transform-origin:0 9.46px">Částka nespárovaná</div>
<div style="left:338.8px;top:341.3px;width:16.19999999999999px;height:13.899999999999977px;background:#fff;border-top:2px solid #7b8caa;border-left:2px solid #7b8caa;border-right:1px solid #e8e8e8;border-bottom:1px solid #e8e8e8;border-radius:2.5px;box-sizing:border-box;box-shadow:0.6px 0.6px 0 #f6f6f6"></div>
<div class="t" style="right:326.8px;top:343.34px;color:#14141c;transform:scale(0.95,0.97);transform-origin:100% 9.46px">16</div>
<div style="left:398.2px;top:341.3px;width:222.8px;height:13.899999999999977px;background:#fff;border-top:2px solid #7b8caa;border-left:2px solid #7b8caa;border-right:1px solid #e8e8e8;border-bottom:1px solid #e8e8e8;border-radius:2.5px;box-sizing:border-box;box-shadow:0.6px 0.6px 0 #f6f6f6"></div>
<div class="t" style="left:401.0px;top:343.34px;color:#14141c;transform:scale(0.835,0.97);transform-origin:0 9.46px">Zbývá</div>
<div style="left:636.8px;top:344.0px;width:10px;height:10px;box-sizing:border-box;background:#fff;border-top:1.5px solid #505b72;border-left:1.5px solid #505b72;border-right:1px solid #e4e4e4;border-bottom:1px solid #e4e4e4;border-radius:1.5px;box-shadow:0.6px 0.6px 0 #f4f4f4"></div>
<div class="t b" style="right:485px;top:359.09px;font-weight:bold;color:#14141c;transform:scale(0.89,0.97);transform-origin:100% 9.46px">12. sloupec:</div>
<div style="left:197.2px;top:357.65000000000003px;width:124.0px;height:14.300000000000011px;background:#fff;border:1.6px solid #7183a4;border-radius:3px;box-sizing:border-box;box-shadow:0.8px 0.8px 0 #f2f2f2"></div>
<div style="left:310.0px;top:359.85px;width:10.0px;height:10.900000000000034px;background:#d0d0d0"></div>
<div style="left:311.7px;top:363.80000000000007px;width:0;height:0;border-left:3px solid transparent;border-right:3px solid transparent;border-top:3.5px solid #5b6f96"></div>
<div class="t" style="left:200.79999999999998px;top:359.79px;color:#14141c;transform:scale(0.835,0.97);transform-origin:0 9.46px">Částka celková</div>
<div style="left:338.8px;top:357.65000000000003px;width:16.19999999999999px;height:13.899999999999977px;background:#fff;border-top:2px solid #7b8caa;border-left:2px solid #7b8caa;border-right:1px solid #e8e8e8;border-bottom:1px solid #e8e8e8;border-radius:2.5px;box-sizing:border-box;box-shadow:0.6px 0.6px 0 #f6f6f6"></div>
<div class="t" style="right:326.8px;top:359.69px;color:#14141c;transform:scale(0.95,0.97);transform-origin:100% 9.46px">16</div>
<div style="left:398.2px;top:357.65000000000003px;width:222.8px;height:13.899999999999977px;background:#fff;border-top:2px solid #7b8caa;border-left:2px solid #7b8caa;border-right:1px solid #e8e8e8;border-bottom:1px solid #e8e8e8;border-radius:2.5px;box-sizing:border-box;box-shadow:0.6px 0.6px 0 #f6f6f6"></div>
<div class="t" style="left:401.0px;top:359.69px;color:#14141c;transform:scale(0.835,0.97);transform-origin:0 9.46px">Celkem</div>
<div style="left:636.8px;top:360.35px;width:10px;height:10px;box-sizing:border-box;background:#fff;border-top:1.5px solid #505b72;border-left:1.5px solid #505b72;border-right:1px solid #e4e4e4;border-bottom:1px solid #e4e4e4;border-radius:1.5px;box-shadow:0.6px 0.6px 0 #f4f4f4"></div>
<div class="t b" style="right:485px;top:375.44px;font-weight:bold;color:#14141c;transform:scale(0.89,0.97);transform-origin:100% 9.46px">13. sloupec:</div>
<div style="left:197.2px;top:374.0px;width:124.0px;height:14.300000000000011px;background:#fff;border:1.6px solid #7183a4;border-radius:3px;box-sizing:border-box;box-shadow:0.8px 0.8px 0 #f2f2f2"></div>
<div style="left:310.0px;top:376.2px;width:10.0px;height:10.900000000000034px;background:#d0d0d0"></div>
<div style="left:311.7px;top:380.15px;width:0;height:0;border-left:3px solid transparent;border-right:3px solid transparent;border-top:3.5px solid #5b6f96"></div>
<div class="t" style="left:200.79999999999998px;top:376.13px;color:#14141c;transform:scale(0.835,0.97);transform-origin:0 9.46px">Neuvedeno</div>
<div style="left:338.8px;top:374.0px;width:16.19999999999999px;height:13.899999999999977px;background:#fff;border-top:2px solid #7b8caa;border-left:2px solid #7b8caa;border-right:1px solid #e8e8e8;border-bottom:1px solid #e8e8e8;border-radius:2.5px;box-sizing:border-box;box-shadow:0.6px 0.6px 0 #f6f6f6"></div>
<div style="left:398.2px;top:374.0px;width:222.8px;height:13.899999999999977px;background:#fff;border-top:2px solid #7b8caa;border-left:2px solid #7b8caa;border-right:1px solid #e8e8e8;border-bottom:1px solid #e8e8e8;border-radius:2.5px;box-sizing:border-box;box-shadow:0.6px 0.6px 0 #f6f6f6"></div>
<div style="left:636.8px;top:376.7px;width:10px;height:10px;box-sizing:border-box;background:#fff;border-top:1.5px solid #505b72;border-left:1.5px solid #505b72;border-right:1px solid #e4e4e4;border-bottom:1px solid #e4e4e4;border-radius:1.5px;box-shadow:0.6px 0.6px 0 #f4f4f4"></div>
<div class="t b" style="right:485px;top:391.79px;font-weight:bold;color:#14141c;transform:scale(0.89,0.97);transform-origin:100% 9.46px">14. sloupec:</div>
<div style="left:197.2px;top:390.35px;width:124.0px;height:14.300000000000011px;background:#fff;border:1.6px solid #7183a4;border-radius:3px;box-sizing:border-box;box-shadow:0.8px 0.8px 0 #f2f2f2"></div>
<div style="left:310.0px;top:392.55px;width:10.0px;height:10.900000000000034px;background:#d0d0d0"></div>
<div style="left:311.7px;top:396.5px;width:0;height:0;border-left:3px solid transparent;border-right:3px solid transparent;border-top:3.5px solid #5b6f96"></div>
<div class="t" style="left:200.79999999999998px;top:392.49px;color:#14141c;transform:scale(0.835,0.97);transform-origin:0 9.46px">Neuvedeno</div>
<div style="left:338.8px;top:390.35px;width:16.19999999999999px;height:13.899999999999977px;background:#fff;border-top:2px solid #7b8caa;border-left:2px solid #7b8caa;border-right:1px solid #e8e8e8;border-bottom:1px solid #e8e8e8;border-radius:2.5px;box-sizing:border-box;box-shadow:0.6px 0.6px 0 #f6f6f6"></div>
<div style="left:398.2px;top:390.35px;width:222.8px;height:13.899999999999977px;background:#fff;border-top:2px solid #7b8caa;border-left:2px solid #7b8caa;border-right:1px solid #e8e8e8;border-bottom:1px solid #e8e8e8;border-radius:2.5px;box-sizing:border-box;box-shadow:0.6px 0.6px 0 #f6f6f6"></div>
<div style="left:636.8px;top:393.05px;width:10px;height:10px;box-sizing:border-box;background:#fff;border-top:1.5px solid #505b72;border-left:1.5px solid #505b72;border-right:1px solid #e4e4e4;border-bottom:1px solid #e4e4e4;border-radius:1.5px;box-shadow:0.6px 0.6px 0 #f4f4f4"></div>
<div class="t b" style="right:485px;top:407.54px;font-weight:bold;color:#14141c;transform:scale(0.89,0.97);transform-origin:100% 9.46px">Oddělovač sloupců:</div>
<div style="left:197.3px;top:406.8px;width:31.69999999999999px;height:13.199999999999989px;background:#fff;border-top:2px solid #7b8caa;border-left:2px solid #7b8caa;border-right:1px solid #e8e8e8;border-bottom:1px solid #e8e8e8;border-radius:2.5px;box-sizing:border-box;box-shadow:0.6px 0.6px 0 #f6f6f6"></div>
<div class="t b" style="right:349.7px;top:407.54px;font-weight:bold;color:#14141c;transform:scale(0.89,0.97);transform-origin:100% 9.46px">Celková délka řádku:</div>
<div style="left:333px;top:406.5px;width:20.5px;height:13.5px;background:#d9d9d9;border-top:2px solid #7b8caa;border-left:2px solid #7b8caa;border-right:1px solid #e8e8e8;border-bottom:1px solid #e8e8e8;border-radius:2.5px;box-sizing:border-box;box-shadow:0.6px 0.6px 0 #f6f6f6"></div>
<div class="t" style="right:328.3px;top:408.14px;color:#14141c;transform:scale(0.95,0.97);transform-origin:100% 9.46px">132</div>
<div class="t b" style="right:246.39999999999998px;top:407.54px;font-weight:bold;color:#14141c;transform:scale(0.92,0.97);transform-origin:100% 9.46px">Velikost:</div>
<div style="left:437px;top:406.8px;width:82px;height:14.899999999999977px;background:#fff;border:1.6px solid #7183a4;border-radius:3px;box-sizing:border-box;box-shadow:0.8px 0.8px 0 #f2f2f2"></div>
<div style="left:507.8px;top:409.0px;width:9.999999999999943px;height:11.5px;background:#d0d0d0"></div>
<div style="left:509.5px;top:413.25px;width:0;height:0;border-left:3px solid transparent;border-right:3px solid transparent;border-top:3.5px solid #5b6f96"></div>
<div class="t" style="left:440.6px;top:408.54px;color:#14141c;transform:scale(0.835,0.97);transform-origin:0 9.46px">Na výšku 132 zn.</div>
<div style="left:581px;top:407.4px;width:26.5px;height:14.600000000000023px;box-sizing:border-box;background:#d9d9d9;border-top:1px solid #fafafa;border-left:1px solid #fafafa;border-right:1.5px solid #8393b0;border-bottom:1.5px solid #8393b0;border-radius:2px"></div>
<div style="left:589.8px;top:412.3px;width:0;height:0;border-left:4.5px solid transparent;border-right:4.5px solid transparent;border-bottom:4.5px solid #000"></div>
<div style="left:608.3px;top:407.4px;width:25.700000000000045px;height:14.600000000000023px;box-sizing:border-box;background:#d9d9d9;border-top:1px solid #fafafa;border-left:1px solid #fafafa;border-right:1.5px solid #8393b0;border-bottom:1.5px solid #8393b0;border-radius:2px"></div>
<div style="left:616.8px;top:412.8px;width:0;height:0;border-left:4.5px solid transparent;border-right:4.5px solid transparent;border-top:4.5px solid #000"></div>
<div class="t b" style="right:485px;top:423.54px;font-weight:bold;color:#14141c;transform:scale(0.89,0.97);transform-origin:100% 9.46px">Třídění podle sloupců:</div>
<div style="left:197.3px;top:422.7px;width:64.69999999999999px;height:13.600000000000023px;background:#fff;border-top:2px solid #7b8caa;border-left:2px solid #7b8caa;border-right:1px solid #e8e8e8;border-bottom:1px solid #e8e8e8;border-radius:2.5px;box-sizing:border-box;box-shadow:0.6px 0.6px 0 #f6f6f6"></div>
<div class="t b" style="right:343.4px;top:423.54px;font-weight:bold;color:#14141c;transform:scale(0.89,0.97);transform-origin:100% 9.46px">Typ výstupu:</div>
<div style="left:339px;top:422.9px;width:47.5px;height:15.100000000000023px;background:#fff;border:1.6px solid #7183a4;border-radius:3px;box-sizing:border-box;box-shadow:0.8px 0.8px 0 #f2f2f2"></div>
<div style="left:375.3px;top:425.09999999999997px;width:10.0px;height:11.700000000000045px;background:#d0d0d0"></div>
<div style="left:377.0px;top:429.45px;width:0;height:0;border-left:3px solid transparent;border-right:3px solid transparent;border-top:3.5px solid #5b6f96"></div>
<div class="t b" style="right:485px;top:439.94px;font-weight:bold;color:#14141c;transform:scale(0.89,0.97);transform-origin:100% 9.46px">Název obrázku:</div>
<div style="left:197.3px;top:439.1px;width:221.7px;height:14.199999999999989px;background:#fff;border-top:2px solid #7b8caa;border-left:2px solid #7b8caa;border-right:1px solid #e8e8e8;border-bottom:1px solid #e8e8e8;border-radius:2.5px;box-sizing:border-box;box-shadow:0.6px 0.6px 0 #f6f6f6"></div>
<div style="left:421.3px;top:439.2px;width:12.0px;height:14.800000000000011px;box-sizing:border-box;background:#d9d9d9;border-top:1px solid #fafafa;border-left:1px solid #fafafa;border-right:1.5px solid #8393b0;border-bottom:1.5px solid #8393b0;border-radius:2px"></div>
<svg style="left:423.5px;top:440.6px" width="8.6" height="12" viewBox="0 0 9 12" preserveAspectRatio="none"><rect width="9" height="12" fill="#000"/><rect y="1" width="9" height="1.5" fill="#1a34e0"/><rect y="2.5" width="9" height="0.8" fill="#fdfaf0"/><rect y="4" width="9" height="1.5" fill="#1a34e0"/><rect y="5.5" width="9" height="0.8" fill="#fdfaf0"/><rect y="7" width="9" height="1.5" fill="#1a34e0"/><rect y="8.5" width="9" height="0.8" fill="#fdfaf0"/><rect y="10" width="9" height="1.5" fill="#1a34e0"/><rect x="0" y="0" width="0.8" height="12" fill="#e8e8e8"/></svg>
<div style="left:446.9px;top:438.1px;width:96.89999999999998px;height:15.599999999999966px;background:#fff;border:1.6px solid #7183a4;border-radius:3px;box-sizing:border-box;box-shadow:0.8px 0.8px 0 #f2f2f2"></div>
<div style="left:532.5999999999999px;top:440.3px;width:10.0px;height:12.199999999999989px;background:#d0d0d0"></div>
<div style="left:534.3px;top:444.9px;width:0;height:0;border-left:3px solid transparent;border-right:3px solid transparent;border-top:3.5px solid #5b6f96"></div>
<div style="left:504.8px;top:464.9px;width:46.69999999999999px;height:14.100000000000023px;box-sizing:border-box;background:#d9d9d9;border-top:1px solid #fafafa;border-left:1px solid #fafafa;border-right:1.5px solid #8393b0;border-bottom:1.5px solid #8393b0;border-radius:2px"></div>
<div class="t" style="left:428.15px;width:200px;text-align:center;top:466.13px;font-size:9px;color:#14141c;transform:scale(0.86,0.97);transform-origin:50% 9.12px">OK</div>
<div style="left:564.6px;top:464.9px;width:46.89999999999998px;height:14.100000000000023px;box-sizing:border-box;background:#d9d9d9;border-top:1px solid #fafafa;border-left:1px solid #fafafa;border-right:1.5px solid #8393b0;border-bottom:1.5px solid #8393b0;border-radius:2px"></div>
<div class="t" style="left:488.04999999999995px;width:200px;text-align:center;top:466.13px;font-size:9px;color:#14141c;transform:scale(0.86,0.97);transform-origin:50% 9.12px">Storno</div>
<div style="left:624.7px;top:464.9px;width:46.799999999999955px;height:14.100000000000023px;box-sizing:border-box;background:#d9d9d9;border-top:1px solid #fafafa;border-left:1px solid #fafafa;border-right:1.5px solid #8393b0;border-bottom:1.5px solid #8393b0;border-radius:2px"></div>
<div class="t" style="left:548.1px;width:200px;text-align:center;top:466.13px;font-size:9px;color:#14141c;transform:scale(0.86,0.97);transform-origin:50% 9.12px">Smazat</div>
<div style="left:3px;top:217px;width:48px;height:59.30000000000001px;background:#dddddd"></div>
<svg style="left:0;top:210px" width="56" height="72" viewBox="0 210 56 72">
<defs>
<filter id="bl" x="-30%" y="-30%" width="160%" height="160%"><feGaussianBlur stdDeviation="0.8"/></filter>
<filter id="bl0" x="-30%" y="-30%" width="160%" height="160%"><feGaussianBlur stdDeviation="0.5"/></filter>
<filter id="bl2" x="-80%" y="-80%" width="260%" height="260%"><feGaussianBlur stdDeviation="1.8"/></filter>
<linearGradient id="hk" gradientUnits="userSpaceOnUse" x1="19" y1="0" x2="33" y2="0"><stop offset="0" stop-color="#d0dae8"/><stop offset="0.35" stop-color="#a9bedf"/><stop offset="0.75" stop-color="#5e8ccb"/><stop offset="1" stop-color="#5987c8"/></linearGradient>
<linearGradient id="st" x1="0" y1="0" x2="0" y2="1"><stop offset="0" stop-color="#a8bad6"/><stop offset="1" stop-color="#cdd3dc"/></linearGradient>
<radialGradient id="ball" cx="0.5" cy="0.45" r="0.55"><stop offset="0" stop-color="#2aa4e8"/><stop offset="0.7" stop-color="#1a8cd6"/><stop offset="1" stop-color="#1670bc"/></radialGradient>
</defs>
<g filter="url(#bl)">
<path d="M15 218.6 L37 218.4 C45 219.5 50.5 225 50.5 232 C50.5 239.5 45 244 38 246 C33 247 29.5 247.5 28.5 249 L21 249 C24 244 26.5 238 26.5 232 C26.5 226 23 221 15 218.6 Z" fill="#5b89c9"/>
<path d="M18 219.6 C25 222 28.5 227 28.5 232.5 C28.5 239 25 245 22.5 249.5 L20.5 249.5 C23 244 25 238 25 232.5 C25 227 22 222.5 18 219.6 Z" fill="#cdd8e8"/>
<path d="M28.5 232.5 C28.5 239 25 245 22.5 249.5 L24.5 249.5 C27 245 30 239 30 232.5 C30 227 26 222 20 219.5 C25 222.5 28.5 227 28.5 232.5 Z" fill="#9bb4da"/>
<ellipse cx="16.3" cy="232.5" rx="10.2" ry="8.4" fill="#5b8acb"/>
<path d="M22 249 L22.5 257 M24.8 248 L25 257.5 M27.5 248 L27.5 256.5" stroke="#a9bad6" stroke-width="1.4"/>
</g>
<ellipse cx="25.5" cy="267" rx="7" ry="7.8" fill="#8ea6d4" filter="url(#bl2)" opacity="1"/>
<ellipse cx="30.5" cy="266.3" rx="8.7" ry="8.1" fill="url(#ball)" filter="url(#bl0)"/>
<clipPath id="bc"><ellipse cx="30.5" cy="266.3" rx="8.7" ry="8.1"/></clipPath>
<filter id="tb" x="0" y="0" width="100%" height="100%"><feTurbulence type="turbulence" baseFrequency="0.22" numOctaves="2" seed="5"/><feColorMatrix type="matrix" values="0 0 0 0 0.45  0 0 0 0 0.85  0 0 0 0 1  0 0 0 2.4 -0.45"/><feGaussianBlur stdDeviation="0.5"/></filter>
<g clip-path="url(#bc)"><rect x="21" y="257" width="19" height="18" filter="url(#tb)" opacity="0.85"/>
<path d="M24 271 C28 270 33 270.5 38 272 L38 276 L22 276 Z" fill="#1a5fb0" opacity="0.6" filter="url(#bl0)"/></g>
</svg>
</body></html>
